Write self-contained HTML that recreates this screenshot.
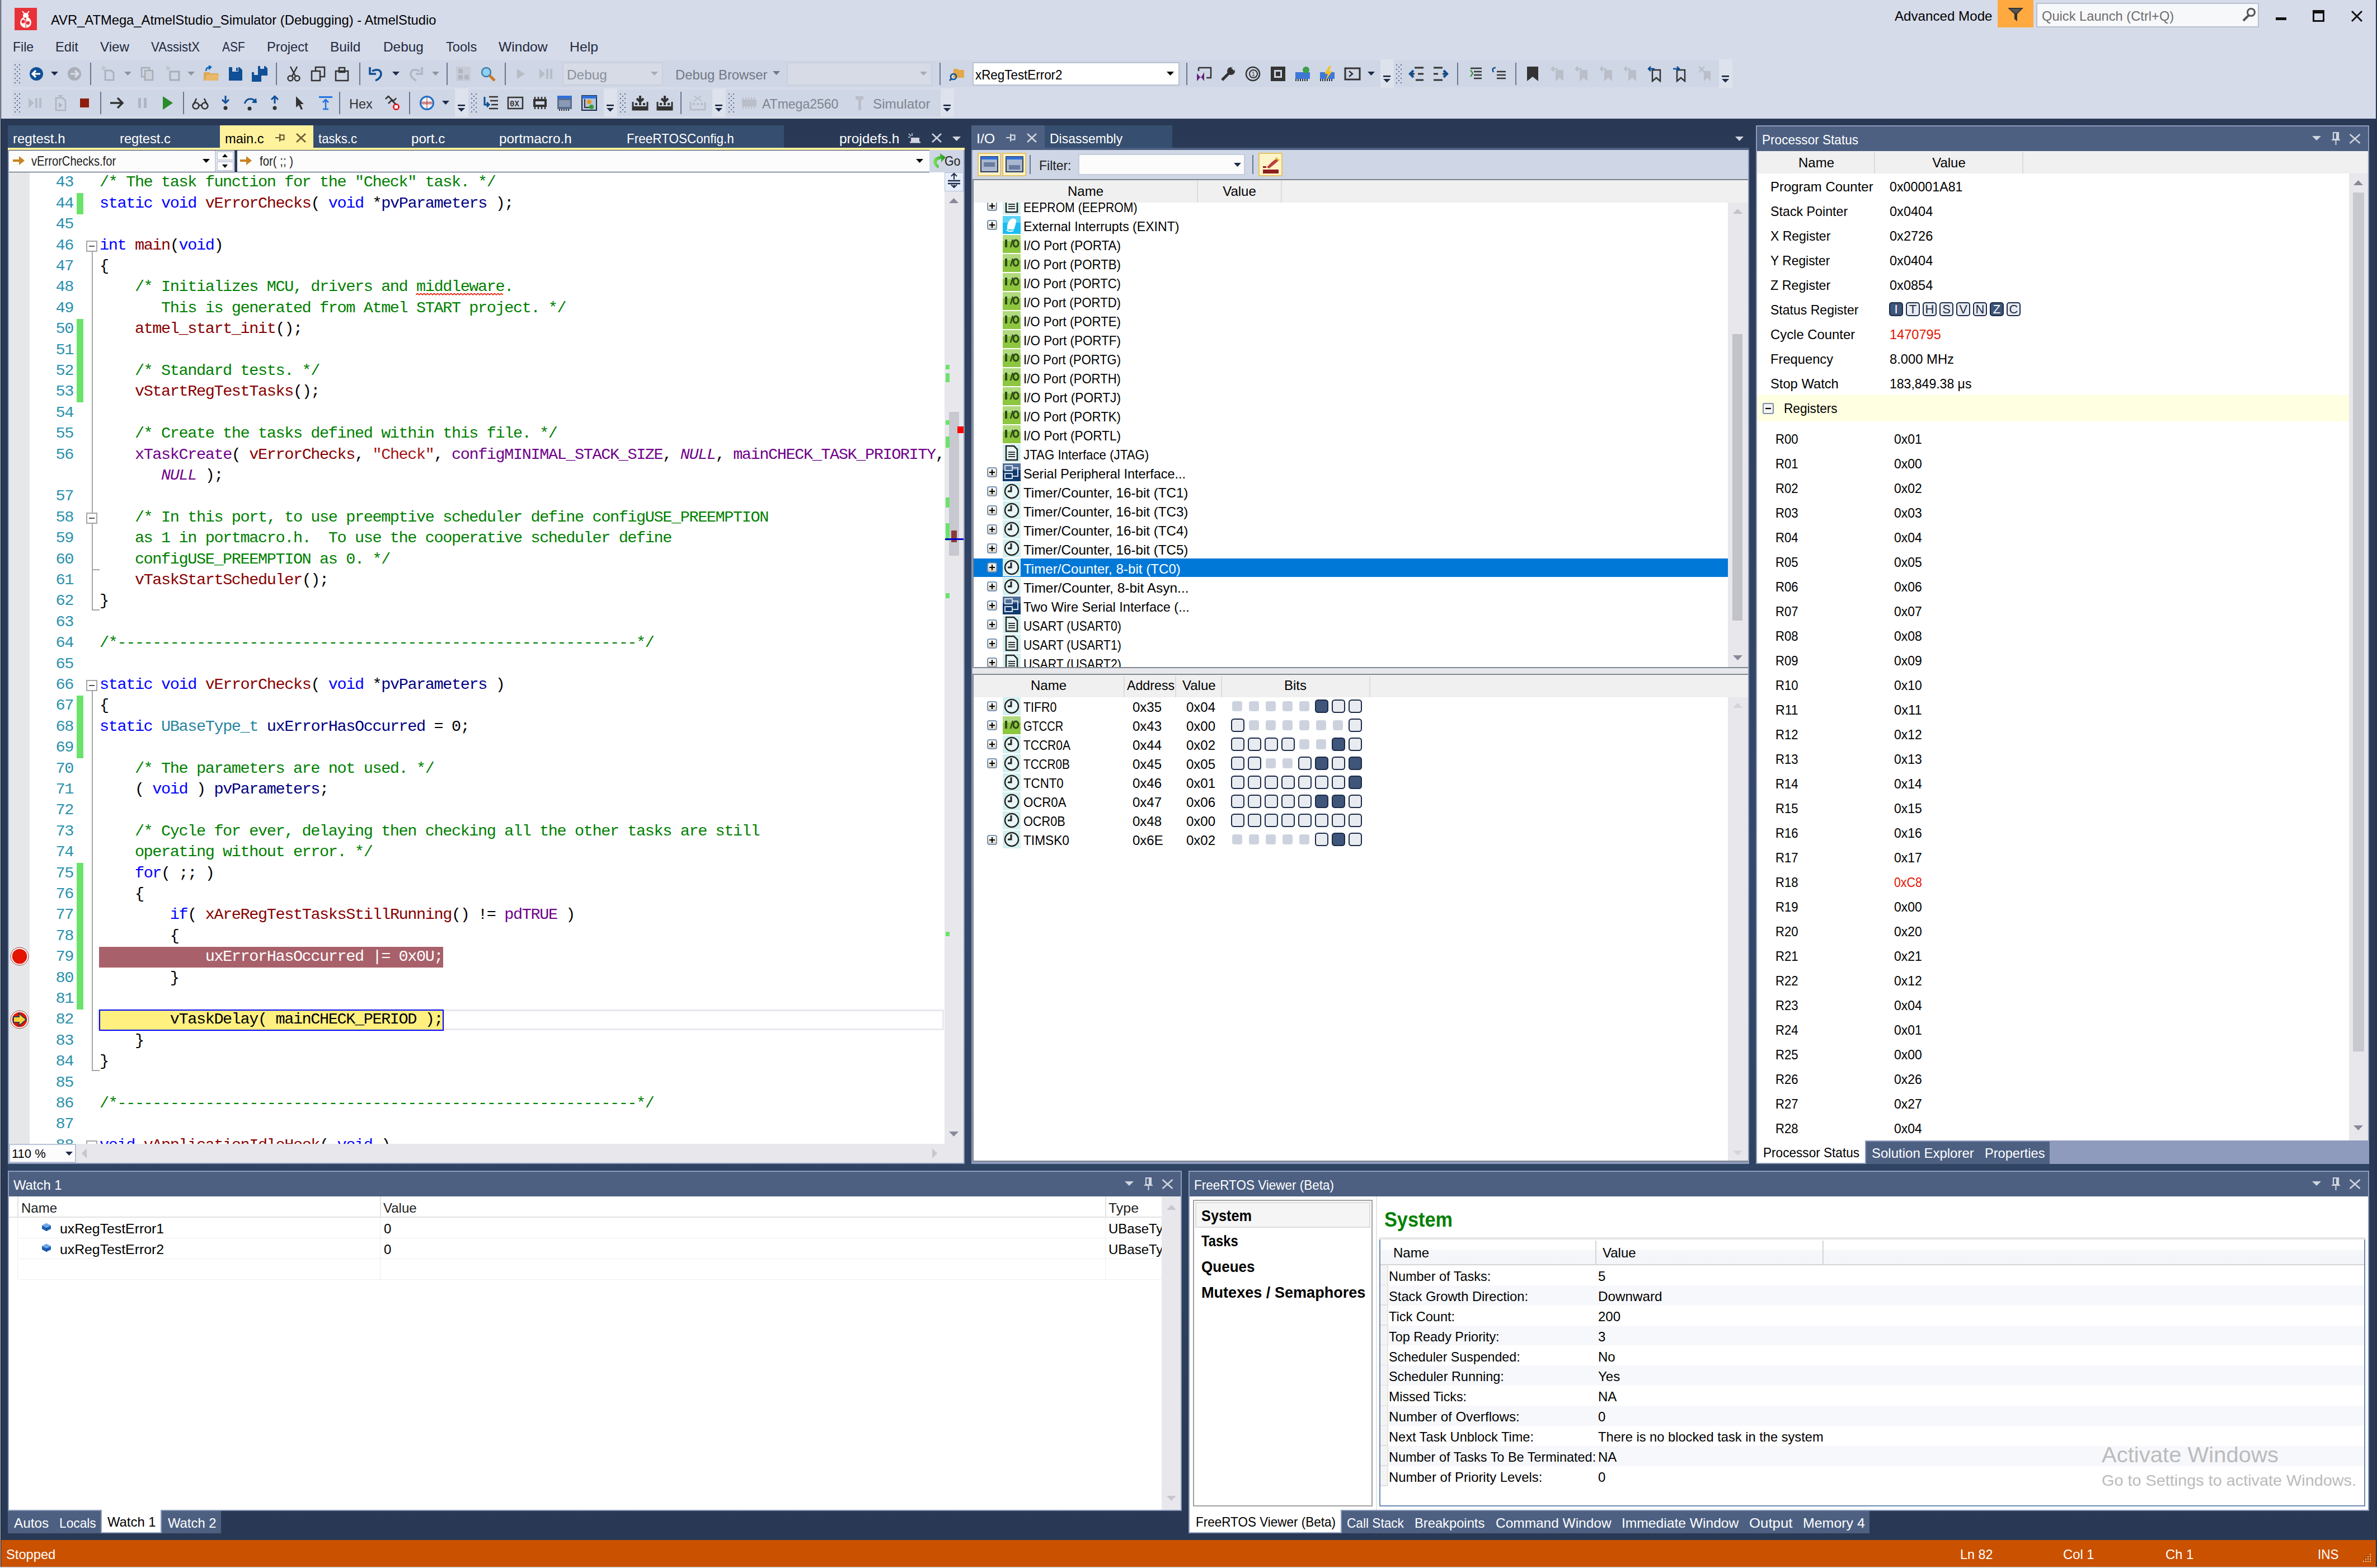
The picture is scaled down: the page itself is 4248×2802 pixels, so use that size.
<!DOCTYPE html>
<html><head><meta charset="utf-8"><title>AtmelStudio</title>
<style>
html,body{margin:0;padding:0;}
body{width:4248px;height:2802px;position:relative;overflow:hidden;background:#293955;font-family:"Liberation Sans",sans-serif;}
.a{position:absolute;}
.t{position:absolute;white-space:pre;line-height:1;font-family:"Liberation Sans",sans-serif;}
.m{position:absolute;white-space:pre;line-height:1;font-family:"Liberation Mono",monospace;font-size:28.5px;letter-spacing:-1.38px;}
</style></head><body>
<div class="a" style="left:14px;top:212px;width:4220px;height:2528px;background:#293955;background:linear-gradient(to bottom, #293955 0%, #2E3F5D 15%, #35496A 52%, #2F4362 75%, #293955 100%);"></div>
<div class="a" style="left:0px;top:0px;width:4248px;height:212px;background:#D6DBE9;"></div>
<div class="a" style="left:0px;top:0px;width:1px;height:2802px;background:#BFC3C8;"></div>
<div class="a" style="left:1px;top:0px;width:1px;height:2802px;background:#0F1F33;"></div>
<div class="a" style="left:4246px;top:0px;width:1px;height:2802px;background:#0F1F33;"></div>
<div class="a" style="left:4247px;top:0px;width:1px;height:2802px;background:#1E4FA0;"></div>
<svg class="a" style="left:26px;top:14px;" width="40" height="40" viewBox="0 0 40 40"><rect width="40" height="40" fill="#E8323A"/><circle cx="20" cy="26" r="10" fill="#fff"/><circle cx="20" cy="14" r="5" fill="#fff"/><path d="M14 6 L18 11 M26 6 L22 11" stroke="#fff" stroke-width="2"/><circle cx="15.5" cy="24.5" r="3.2" fill="#E8323A"/><circle cx="24" cy="27" r="3.2" fill="#E8323A"/><circle cx="19" cy="19" r="1.8" fill="#E8323A"/><path d="M20 17 V36" stroke="#E8323A" stroke-width="1.2"/></svg>
<div class="t" style="left:91px;top:23.60px;font-size:24px;color:#000;font-weight:400;transform:scaleX(0.9900);transform-origin:0 0;">AVR_ATMega_AtmelStudio_Simulator (Debugging) - AtmelStudio</div>
<div class="t" style="left:3386px;top:16.60px;font-size:24px;color:#000;font-weight:400;transform:scaleX(1.0060);transform-origin:0 0;">Advanced Mode</div>
<div class="a" style="left:3570px;top:0px;width:64px;height:49px;background:#FFA940;"></div>
<svg class="a" style="left:3586px;top:12px;" width="34" height="28" viewBox="0 0 34 28"><path d="M2 2 H30 L19 13 V26 L14 22 V13 Z" fill="#333"/><path d="M6 4 H26 L17 12" fill="#555"/></svg>
<div class="a" style="left:3639px;top:5px;width:398px;height:44px;background:#B9C0D0;"></div>
<div class="a" style="left:3641px;top:7px;width:394px;height:40px;background:#F7F8FA;"></div>
<div class="t" style="left:3649px;top:16.60px;font-size:24px;color:#6D6D6D;font-weight:400;transform:scaleX(0.9865);transform-origin:0 0;">Quick Launch (Ctrl+Q)</div>
<svg class="a" style="left:4004px;top:12px;" width="30" height="30" viewBox="0 0 30 30"><circle cx="19" cy="10" r="6.5" fill="none" stroke="#555" stroke-width="3"/><path d="M15 15 L5 25" stroke="#555" stroke-width="4"/></svg>
<div class="a" style="left:4067px;top:31px;width:19px;height:5px;background:#111;"></div>
<svg class="a" style="left:4133px;top:18px;" width="22" height="22" viewBox="0 0 22 22"><rect x="1.5" y="1.5" width="18" height="18" fill="none" stroke="#111" stroke-width="3"/><rect x="1" y="1" width="19" height="5" fill="#111"/></svg>
<svg class="a" style="left:4200px;top:18px;" width="24" height="22" viewBox="0 0 24 22"><path d="M3 2 L21 20 M21 2 L3 20" stroke="#111" stroke-width="3"/></svg>
<div class="t" style="left:23px;top:71.60px;font-size:24px;color:#1E2A3E;font-weight:400;transform:scaleX(0.9593);transform-origin:0 0;">File</div>
<div class="t" style="left:99px;top:71.60px;font-size:24px;color:#1E2A3E;font-weight:400;transform:scaleX(0.9865);transform-origin:0 0;">Edit</div>
<div class="t" style="left:179px;top:71.60px;font-size:24px;color:#1E2A3E;font-weight:400;transform:scaleX(1.0060);transform-origin:0 0;">View</div>
<div class="t" style="left:270px;top:71.60px;font-size:24px;color:#1E2A3E;font-weight:400;transform:scaleX(0.9242);transform-origin:0 0;">VAssistX</div>
<div class="t" style="left:397px;top:71.60px;font-size:24px;color:#1E2A3E;font-weight:400;transform:scaleX(0.8741);transform-origin:0 0;">ASF</div>
<div class="t" style="left:477px;top:71.60px;font-size:24px;color:#1E2A3E;font-weight:400;transform:scaleX(0.9866);transform-origin:0 0;">Project</div>
<div class="t" style="left:590px;top:71.60px;font-size:24px;color:#1E2A3E;font-weight:400;transform:scaleX(1.0174);transform-origin:0 0;">Build</div>
<div class="t" style="left:685px;top:71.60px;font-size:24px;color:#1E2A3E;font-weight:400;transform:scaleX(1.0152);transform-origin:0 0;">Debug</div>
<div class="t" style="left:797px;top:71.60px;font-size:24px;color:#1E2A3E;font-weight:400;transform:scaleX(0.9852);transform-origin:0 0;">Tools</div>
<div class="t" style="left:891px;top:71.60px;font-size:24px;color:#1E2A3E;font-weight:400;transform:scaleX(1.0262);transform-origin:0 0;">Window</div>
<div class="t" style="left:1018px;top:71.60px;font-size:24px;color:#1E2A3E;font-weight:400;transform:scaleX(1.0332);transform-origin:0 0;">Help</div>
<div class="a" style="left:22px;top:108px;width:2445px;height:48px;background:#CFD6E5;"></div>
<div class="a" style="left:2467px;top:106px;width:24px;height:51px;background:#DDE2EC;"></div>
<svg class="a" style="left:2472px;top:135px;" width="14" height="14" viewBox="0 0 14 14"><rect x="0" y="0" width="13" height="2.5" fill="#0E1A33"/><path d="M0 6 H13 L6.5 12.5 Z" fill="#1B2A47"/></svg>
<div class="a" style="left:2491px;top:108px;width:581px;height:48px;background:#CFD6E5;"></div>
<div class="a" style="left:3072px;top:106px;width:24px;height:51px;background:#DDE2EC;"></div>
<svg class="a" style="left:3077px;top:135px;" width="14" height="14" viewBox="0 0 14 14"><rect x="0" y="0" width="13" height="2.5" fill="#0E1A33"/><path d="M0 6 H13 L6.5 12.5 Z" fill="#1B2A47"/></svg>
<div class="a" style="left:22px;top:160px;width:791px;height:48px;background:#CFD6E5;"></div>
<div class="a" style="left:813px;top:158px;width:24px;height:51px;background:#DDE2EC;"></div>
<svg class="a" style="left:818px;top:187px;" width="14" height="14" viewBox="0 0 14 14"><rect x="0" y="0" width="13" height="2.5" fill="#0E1A33"/><path d="M0 6 H13 L6.5 12.5 Z" fill="#1B2A47"/></svg>
<div class="a" style="left:837px;top:160px;width:242px;height:48px;background:#CFD6E5;"></div>
<div class="a" style="left:1079px;top:158px;width:24px;height:51px;background:#DDE2EC;"></div>
<svg class="a" style="left:1084px;top:187px;" width="14" height="14" viewBox="0 0 14 14"><rect x="0" y="0" width="13" height="2.5" fill="#0E1A33"/><path d="M0 6 H13 L6.5 12.5 Z" fill="#1B2A47"/></svg>
<div class="a" style="left:1103px;top:160px;width:170px;height:48px;background:#CFD6E5;"></div>
<div class="a" style="left:1273px;top:158px;width:24px;height:51px;background:#DDE2EC;"></div>
<svg class="a" style="left:1278px;top:187px;" width="14" height="14" viewBox="0 0 14 14"><rect x="0" y="0" width="13" height="2.5" fill="#0E1A33"/><path d="M0 6 H13 L6.5 12.5 Z" fill="#1B2A47"/></svg>
<div class="a" style="left:1297px;top:160px;width:384px;height:48px;background:#CFD6E5;"></div>
<div class="a" style="left:1681px;top:158px;width:24px;height:51px;background:#DDE2EC;"></div>
<svg class="a" style="left:1686px;top:187px;" width="14" height="14" viewBox="0 0 14 14"><rect x="0" y="0" width="13" height="2.5" fill="#0E1A33"/><path d="M0 6 H13 L6.5 12.5 Z" fill="#1B2A47"/></svg>
<svg class="a" style="left:26px;top:115px;" width="10" height="34" viewBox="0 0 10 34"><rect x="0" y="0" width="2" height="2" fill="#5B6A8A"/><rect x="8" y="0" width="2" height="2" fill="#5B6A8A"/><rect x="4" y="4" width="2" height="2" fill="#5B6A8A"/><rect x="0" y="8" width="2" height="2" fill="#5B6A8A"/><rect x="8" y="8" width="2" height="2" fill="#5B6A8A"/><rect x="4" y="12" width="2" height="2" fill="#5B6A8A"/><rect x="0" y="16" width="2" height="2" fill="#5B6A8A"/><rect x="8" y="16" width="2" height="2" fill="#5B6A8A"/><rect x="4" y="20" width="2" height="2" fill="#5B6A8A"/><rect x="0" y="24" width="2" height="2" fill="#5B6A8A"/><rect x="8" y="24" width="2" height="2" fill="#5B6A8A"/><rect x="4" y="28" width="2" height="2" fill="#5B6A8A"/><rect x="0" y="32" width="2" height="2" fill="#5B6A8A"/><rect x="8" y="32" width="2" height="2" fill="#5B6A8A"/></svg>
<svg class="a" style="left:26px;top:167px;" width="10" height="34" viewBox="0 0 10 34"><rect x="0" y="0" width="2" height="2" fill="#5B6A8A"/><rect x="8" y="0" width="2" height="2" fill="#5B6A8A"/><rect x="4" y="4" width="2" height="2" fill="#5B6A8A"/><rect x="0" y="8" width="2" height="2" fill="#5B6A8A"/><rect x="8" y="8" width="2" height="2" fill="#5B6A8A"/><rect x="4" y="12" width="2" height="2" fill="#5B6A8A"/><rect x="0" y="16" width="2" height="2" fill="#5B6A8A"/><rect x="8" y="16" width="2" height="2" fill="#5B6A8A"/><rect x="4" y="20" width="2" height="2" fill="#5B6A8A"/><rect x="0" y="24" width="2" height="2" fill="#5B6A8A"/><rect x="8" y="24" width="2" height="2" fill="#5B6A8A"/><rect x="4" y="28" width="2" height="2" fill="#5B6A8A"/><rect x="0" y="32" width="2" height="2" fill="#5B6A8A"/><rect x="8" y="32" width="2" height="2" fill="#5B6A8A"/></svg>
<svg class="a" style="left:2495px;top:115px;" width="10" height="34" viewBox="0 0 10 34"><rect x="0" y="0" width="2" height="2" fill="#5B6A8A"/><rect x="8" y="0" width="2" height="2" fill="#5B6A8A"/><rect x="4" y="4" width="2" height="2" fill="#5B6A8A"/><rect x="0" y="8" width="2" height="2" fill="#5B6A8A"/><rect x="8" y="8" width="2" height="2" fill="#5B6A8A"/><rect x="4" y="12" width="2" height="2" fill="#5B6A8A"/><rect x="0" y="16" width="2" height="2" fill="#5B6A8A"/><rect x="8" y="16" width="2" height="2" fill="#5B6A8A"/><rect x="4" y="20" width="2" height="2" fill="#5B6A8A"/><rect x="0" y="24" width="2" height="2" fill="#5B6A8A"/><rect x="8" y="24" width="2" height="2" fill="#5B6A8A"/><rect x="4" y="28" width="2" height="2" fill="#5B6A8A"/><rect x="0" y="32" width="2" height="2" fill="#5B6A8A"/><rect x="8" y="32" width="2" height="2" fill="#5B6A8A"/></svg>
<svg class="a" style="left:842px;top:167px;" width="10" height="34" viewBox="0 0 10 34"><rect x="0" y="0" width="2" height="2" fill="#5B6A8A"/><rect x="8" y="0" width="2" height="2" fill="#5B6A8A"/><rect x="4" y="4" width="2" height="2" fill="#5B6A8A"/><rect x="0" y="8" width="2" height="2" fill="#5B6A8A"/><rect x="8" y="8" width="2" height="2" fill="#5B6A8A"/><rect x="4" y="12" width="2" height="2" fill="#5B6A8A"/><rect x="0" y="16" width="2" height="2" fill="#5B6A8A"/><rect x="8" y="16" width="2" height="2" fill="#5B6A8A"/><rect x="4" y="20" width="2" height="2" fill="#5B6A8A"/><rect x="0" y="24" width="2" height="2" fill="#5B6A8A"/><rect x="8" y="24" width="2" height="2" fill="#5B6A8A"/><rect x="4" y="28" width="2" height="2" fill="#5B6A8A"/><rect x="0" y="32" width="2" height="2" fill="#5B6A8A"/><rect x="8" y="32" width="2" height="2" fill="#5B6A8A"/></svg>
<svg class="a" style="left:1108px;top:167px;" width="10" height="34" viewBox="0 0 10 34"><rect x="0" y="0" width="2" height="2" fill="#5B6A8A"/><rect x="8" y="0" width="2" height="2" fill="#5B6A8A"/><rect x="4" y="4" width="2" height="2" fill="#5B6A8A"/><rect x="0" y="8" width="2" height="2" fill="#5B6A8A"/><rect x="8" y="8" width="2" height="2" fill="#5B6A8A"/><rect x="4" y="12" width="2" height="2" fill="#5B6A8A"/><rect x="0" y="16" width="2" height="2" fill="#5B6A8A"/><rect x="8" y="16" width="2" height="2" fill="#5B6A8A"/><rect x="4" y="20" width="2" height="2" fill="#5B6A8A"/><rect x="0" y="24" width="2" height="2" fill="#5B6A8A"/><rect x="8" y="24" width="2" height="2" fill="#5B6A8A"/><rect x="4" y="28" width="2" height="2" fill="#5B6A8A"/><rect x="0" y="32" width="2" height="2" fill="#5B6A8A"/><rect x="8" y="32" width="2" height="2" fill="#5B6A8A"/></svg>
<svg class="a" style="left:1302px;top:167px;" width="10" height="34" viewBox="0 0 10 34"><rect x="0" y="0" width="2" height="2" fill="#5B6A8A"/><rect x="8" y="0" width="2" height="2" fill="#5B6A8A"/><rect x="4" y="4" width="2" height="2" fill="#5B6A8A"/><rect x="0" y="8" width="2" height="2" fill="#5B6A8A"/><rect x="8" y="8" width="2" height="2" fill="#5B6A8A"/><rect x="4" y="12" width="2" height="2" fill="#5B6A8A"/><rect x="0" y="16" width="2" height="2" fill="#5B6A8A"/><rect x="8" y="16" width="2" height="2" fill="#5B6A8A"/><rect x="4" y="20" width="2" height="2" fill="#5B6A8A"/><rect x="0" y="24" width="2" height="2" fill="#5B6A8A"/><rect x="8" y="24" width="2" height="2" fill="#5B6A8A"/><rect x="4" y="28" width="2" height="2" fill="#5B6A8A"/><rect x="0" y="32" width="2" height="2" fill="#5B6A8A"/><rect x="8" y="32" width="2" height="2" fill="#5B6A8A"/></svg>
<svg class="a" style="left:50px;top:117px;" width="30" height="30" viewBox="0 0 30 30"><circle cx="15" cy="15" r="12" fill="#0E4F96"/><path d="M8 15 H22 M14 9 L8 15 L14 21" stroke="#fff" stroke-width="3.2" fill="none"/></svg>
<svg class="a" style="left:91px;top:128px;" width="14" height="8" viewBox="0 0 14 8"><path d="M0 0 H13 L6.5 7 Z" fill="#1B2A47"/></svg>
<svg class="a" style="left:118px;top:117px;" width="30" height="30" viewBox="0 0 30 30"><circle cx="15" cy="15" r="12" fill="#A9AEB8"/><path d="M8 15 H22 M16 9 L22 15 L16 21" stroke="#D8DCE4" stroke-width="3.2" fill="none"/></svg>
<div class="a" style="left:161px;top:112px;width:2px;height:40px;background:#6B7590;"></div>
<svg class="a" style="left:179px;top:117px;" width="30" height="30" viewBox="0 0 30 30"><path d="M9 9 H20 L24 13 V26 H9 Z" fill="none" stroke="#A8ADB8" stroke-width="2.5"/><path d="M3 2 L9 8 M9 2 L3 8 M6 1 V9 M2 5 H10" stroke="#C0C4CC" stroke-width="1.5"/></svg>
<svg class="a" style="left:222px;top:128px;" width="14" height="8" viewBox="0 0 14 8"><path d="M0 0 H13 L6.5 7 Z" fill="#8E939E"/></svg>
<svg class="a" style="left:247px;top:117px;" width="30" height="30" viewBox="0 0 30 30"><rect x="6" y="4" width="14" height="16" fill="none" stroke="#A8ADB8" stroke-width="2.5"/><rect x="12" y="9" width="14" height="17" fill="#CDD1DA" stroke="#A8ADB8" stroke-width="2.5"/></svg>
<svg class="a" style="left:294px;top:117px;" width="30" height="30" viewBox="0 0 30 30"><rect x="10" y="11" width="16" height="15" fill="none" stroke="#A8ADB8" stroke-width="3"/><path d="M3 2 L9 8 M9 2 L3 8 M6 1 V9 M2 5 H10" stroke="#C0C4CC" stroke-width="1.5"/></svg>
<svg class="a" style="left:335px;top:128px;" width="14" height="8" viewBox="0 0 14 8"><path d="M0 0 H13 L6.5 7 Z" fill="#8E939E"/></svg>
<svg class="a" style="left:362px;top:117px;" width="30" height="30" viewBox="0 0 30 30"><path d="M2 12 H12 L14 14 H28 V27 H2 Z" fill="#DCA955"/><path d="M4 27 L8 16 H30 L26 27 Z" fill="#E8B96A"/><path d="M6 10 Q6 3 14 3 M11 0 L15 3 L11 7" stroke="#0E62B8" stroke-width="2.5" fill="none"/></svg>
<svg class="a" style="left:406px;top:117px;" width="30" height="30" viewBox="0 0 30 30"><path d="M3 3 H22 L27 8 V27 H3 Z" fill="#0E4F96"/><rect x="9" y="3" width="11" height="8" fill="#CFD6E5"/><rect x="16" y="4" width="3" height="6" fill="#0E4F96"/></svg>
<svg class="a" style="left:449px;top:117px;" width="30" height="30" viewBox="0 0 30 30"><path d="M12 1 H25 L29 5 V18 H12 Z" fill="#0E4F96"/><rect x="16" y="1" width="7" height="5" fill="#CFD6E5"/><path d="M1 12 H14 L18 16 V29 H1 Z" fill="#0E4F96"/><rect x="5" y="12" width="7" height="5" fill="#CFD6E5"/></svg>
<div class="a" style="left:493px;top:112px;width:2px;height:40px;background:#6B7590;"></div>
<svg class="a" style="left:510px;top:117px;" width="30" height="30" viewBox="0 0 30 30"><path d="M9 2 L18 19 M21 2 L12 19" stroke="#333" stroke-width="2.5"/><circle cx="9" cy="23" r="4.5" fill="none" stroke="#333" stroke-width="2.5"/><circle cx="21" cy="23" r="4.5" fill="none" stroke="#333" stroke-width="2.5"/></svg>
<svg class="a" style="left:554px;top:117px;" width="30" height="30" viewBox="0 0 30 30"><rect x="3" y="10" width="15" height="17" fill="#CFD6E5" stroke="#333" stroke-width="2.5"/><path d="M10 9 V3 H26 V20 H19" fill="none" stroke="#333" stroke-width="2.5"/></svg>
<svg class="a" style="left:596px;top:117px;" width="30" height="30" viewBox="0 0 30 30"><rect x="4" y="10" width="22" height="17" fill="none" stroke="#333" stroke-width="2.5"/><rect x="10" y="4" width="10" height="8" fill="none" stroke="#333" stroke-width="2.5"/></svg>
<div class="a" style="left:642px;top:112px;width:2px;height:40px;background:#6B7590;"></div>
<svg class="a" style="left:657px;top:117px;" width="30" height="30" viewBox="0 0 30 30"><path d="M8 10 Q22 4 24 14 Q25 22 14 27" stroke="#0E4F96" stroke-width="3.5" fill="none"/><path d="M4 3 V15 H15" stroke="#0E4F96" stroke-width="3.5" fill="none"/></svg>
<svg class="a" style="left:701px;top:128px;" width="14" height="8" viewBox="0 0 14 8"><path d="M0 0 H13 L6.5 7 Z" fill="#1B2A47"/></svg>
<svg class="a" style="left:728px;top:117px;" width="30" height="30" viewBox="0 0 30 30"><path d="M22 10 Q8 4 6 14 Q5 22 16 27" stroke="#B0B5BF" stroke-width="3.5" fill="none"/><path d="M26 3 V15 H15" stroke="#B0B5BF" stroke-width="3.5" fill="none"/></svg>
<svg class="a" style="left:772px;top:128px;" width="14" height="8" viewBox="0 0 14 8"><path d="M0 0 H13 L6.5 7 Z" fill="#8E939E"/></svg>
<div class="a" style="left:798px;top:112px;width:2px;height:40px;background:#6B7590;"></div>
<svg class="a" style="left:813px;top:117px;" width="30" height="30" viewBox="0 0 30 30"><rect x="2" y="2" width="26" height="26" fill="#C6CBD6"/><rect x="6" y="6" width="8" height="8" fill="#B0B5C0"/><rect x="6" y="17" width="8" height="8" fill="#B0B5C0"/><rect x="17" y="17" width="8" height="8" fill="#B0B5C0"/></svg>
<svg class="a" style="left:857px;top:117px;" width="30" height="30" viewBox="0 0 30 30"><circle cx="12" cy="12" r="8" fill="#8FD0F0" stroke="#3E7FA8" stroke-width="2.5"/><path d="M18 18 L27 27" stroke="#C77A2A" stroke-width="5"/></svg>
<div class="a" style="left:902px;top:112px;width:2px;height:40px;background:#6B7590;"></div>
<svg class="a" style="left:915px;top:117px;" width="30" height="30" viewBox="0 0 30 30"><path d="M9 6 L23 15 L9 24 Z" fill="#B7BCC6"/></svg>
<svg class="a" style="left:961px;top:117px;" width="30" height="30" viewBox="0 0 30 30"><path d="M3 6 L13 15 L3 24 Z" fill="#B7BCC6"/><rect x="15" y="6" width="4" height="18" fill="#B7BCC6"/><rect x="22" y="6" width="4" height="18" fill="#B7BCC6"/></svg>
<div class="a" style="left:1005px;top:111px;width:180px;height:42px;background:#C9CFDC;"></div>
<div class="a" style="left:1007px;top:113px;width:176px;height:38px;background:#D6DBE6;"></div>
<div class="t" style="left:1013px;top:121.60px;font-size:24px;color:#8C919C;font-weight:400;transform:scaleX(1.0152);transform-origin:0 0;">Debug</div>
<svg class="a" style="left:1163px;top:128px;" width="14" height="8" viewBox="0 0 14 8"><path d="M0 0 H13 L6.5 7 Z" fill="#A6ABB6"/></svg>
<div class="t" style="left:1207px;top:121.60px;font-size:24px;color:#727885;font-weight:400;transform:scaleX(0.9945);transform-origin:0 0;">Debug Browser</div>
<svg class="a" style="left:1381px;top:127px;" width="14" height="8" viewBox="0 0 14 8"><path d="M0 0 H13 L6.5 7 Z" fill="#727885"/></svg>
<div class="a" style="left:1406px;top:111px;width:260px;height:42px;background:#C9CFDC;"></div>
<div class="a" style="left:1408px;top:113px;width:256px;height:38px;background:#D6DBE6;"></div>
<svg class="a" style="left:1644px;top:128px;" width="14" height="8" viewBox="0 0 14 8"><path d="M0 0 H13 L6.5 7 Z" fill="#A6ABB6"/></svg>
<div class="a" style="left:1679px;top:112px;width:2px;height:40px;background:#6B7590;"></div>
<svg class="a" style="left:1696px;top:117px;" width="30" height="30" viewBox="0 0 30 30"><path d="M8 6 H15 L17 8 H27 V22 H8 Z" fill="#E2A84A"/><circle cx="8" cy="20" r="5" fill="none" stroke="#0E4F96" stroke-width="2.5"/><path d="M4.5 23.5 L1 27" stroke="#0E4F96" stroke-width="3"/></svg>
<div class="a" style="left:1738px;top:111px;width:370px;height:42px;background:#B9C0D0;"></div>
<div class="a" style="left:1740px;top:113px;width:366px;height:38px;background:#FFFFFF;"></div>
<div class="t" style="left:1743px;top:121.60px;font-size:24px;color:#000;font-weight:400;transform:scaleX(0.9326);transform-origin:0 0;">xRegTestError2</div>
<svg class="a" style="left:2085px;top:128px;" width="14" height="8" viewBox="0 0 14 8"><path d="M0 0 H13 L6.5 7 Z" fill="#000"/></svg>
<div class="a" style="left:2120px;top:112px;width:2px;height:40px;background:#6B7590;"></div>
<svg class="a" style="left:2136px;top:117px;" width="30" height="30" viewBox="0 0 30 30"><path d="M6 4 H28 V22 H20" fill="none" stroke="#333" stroke-width="2.5"/><path d="M6 4 V10" stroke="#333" stroke-width="2.5"/><path d="M3 14 L10 22 L16 12 V28 L10 20 L3 28 Z" fill="#68217A"/></svg>
<svg class="a" style="left:2180px;top:117px;" width="30" height="30" viewBox="0 0 30 30"><path d="M4 26 L16 14" stroke="#333" stroke-width="5"/><circle cx="20" cy="10" r="7" fill="#333"/><path d="M20 4 L26 4 L26 10" fill="#CFD6E5"/></svg>
<svg class="a" style="left:2224px;top:117px;" width="30" height="30" viewBox="0 0 30 30"><circle cx="15" cy="15" r="12" fill="none" stroke="#333" stroke-width="2.5"/><circle cx="16" cy="15" r="7" fill="none" stroke="#333" stroke-width="2"/><text x="13" y="19" font-size="10" fill="#333">1</text></svg>
<svg class="a" style="left:2269px;top:117px;" width="30" height="30" viewBox="0 0 30 30"><rect x="2" y="2" width="26" height="26" fill="#333"/><rect x="8" y="8" width="14" height="14" fill="#CFD6E5"/><rect x="11" y="11" width="8" height="8" fill="#333"/></svg>
<svg class="a" style="left:2313px;top:117px;" width="30" height="30" viewBox="0 0 30 30"><rect x="2" y="12" width="26" height="12" fill="#3E78D6"/><path d="M3 24 V28 M7 24 V28 M11 24 V28 M15 24 V28 M19 24 V28 M23 24 V28" stroke="#333" stroke-width="2"/><circle cx="21" cy="8" r="6" fill="#3CA04A"/></svg>
<svg class="a" style="left:2357px;top:117px;" width="30" height="30" viewBox="0 0 30 30"><rect x="2" y="12" width="26" height="12" fill="#3E78D6"/><path d="M3 24 V28 M7 24 V28 M11 24 V28 M15 24 V28 M19 24 V28 M23 24 V28" stroke="#333" stroke-width="2"/><path d="M18 1 L10 15 H16 L12 27 L24 10 H18 L22 1 Z" fill="#F2C12E"/></svg>
<svg class="a" style="left:2402px;top:117px;" width="30" height="30" viewBox="0 0 30 30"><rect x="2" y="5" width="26" height="20" fill="none" stroke="#333" stroke-width="3"/><path d="M9 10 L15 15 L9 20" stroke="#333" stroke-width="2.5" fill="none"/></svg>
<svg class="a" style="left:2444px;top:128px;" width="14" height="8" viewBox="0 0 14 8"><path d="M0 0 H13 L6.5 7 Z" fill="#1B2A47"/></svg>
<svg class="a" style="left:2516px;top:117px;" width="30" height="30" viewBox="0 0 30 30"><path d="M12 4 H28 M14 26 H28 M2 15 H12 M18 15 H28" stroke="#333" stroke-width="3"/><path d="M10 9 L4 15 L10 21" stroke="#0E4F96" stroke-width="4" fill="none"/></svg>
<svg class="a" style="left:2560px;top:117px;" width="30" height="30" viewBox="0 0 30 30"><path d="M2 4 H18 M2 26 H18 M2 15 H10 M18 15 H28" stroke="#333" stroke-width="3"/><path d="M20 9 L26 15 L20 21" stroke="#0E4F96" stroke-width="4" fill="none"/></svg>
<div class="a" style="left:2604px;top:112px;width:2px;height:40px;background:#6B7590;"></div>
<svg class="a" style="left:2622px;top:117px;" width="30" height="30" viewBox="0 0 30 30"><path d="M6 5 H26 M12 11 H26 M12 17 H26 M12 23 H26" stroke="#333" stroke-width="2.5"/><path d="M6 8 L10 14 L6 20" stroke="#2B8A2B" stroke-width="2" fill="none"/></svg>
<svg class="a" style="left:2663px;top:117px;" width="30" height="30" viewBox="0 0 30 30"><path d="M12 11 H28 M12 17 H28 M12 23 H28" stroke="#333" stroke-width="2.5"/><path d="M6 12 Q2 4 10 4" stroke="#0E4F96" stroke-width="2.5" fill="none"/></svg>
<div class="a" style="left:2708px;top:112px;width:2px;height:40px;background:#6B7590;"></div>
<svg class="a" style="left:2724px;top:117px;" width="30" height="30" viewBox="0 0 30 30"><path d="M5 2 H25 V28 L15 20 L5 28 Z" fill="#333"/></svg>
<svg class="a" style="left:2770px;top:117px;" width="30" height="30" viewBox="0 0 30 30"><path d="M10 8 H24 V28 L17 22 L10 28 Z" fill="#B9BEC8"/><path d="M3 6 H14 M7 2 L3 6 L7 10" stroke="#B9BEC8" stroke-width="2.5" fill="none"/></svg>
<svg class="a" style="left:2813px;top:117px;" width="30" height="30" viewBox="0 0 30 30"><path d="M10 8 H24 V28 L17 22 L10 28 Z" fill="#B9BEC8"/><path d="M3 6 H14 M7 2 L3 6 L7 10" stroke="#B9BEC8" stroke-width="2.5" fill="none"/></svg>
<svg class="a" style="left:2857px;top:117px;" width="30" height="30" viewBox="0 0 30 30"><path d="M10 8 H24 V28 L17 22 L10 28 Z" fill="#B9BEC8"/><path d="M3 6 H14 M7 2 L3 6 L7 10" stroke="#B9BEC8" stroke-width="2.5" fill="none"/></svg>
<svg class="a" style="left:2900px;top:117px;" width="30" height="30" viewBox="0 0 30 30"><path d="M10 8 H24 V28 L17 22 L10 28 Z" fill="#B9BEC8"/><path d="M3 6 H14 M7 2 L3 6 L7 10" stroke="#B9BEC8" stroke-width="2.5" fill="none"/></svg>
<svg class="a" style="left:2943px;top:117px;" width="30" height="30" viewBox="0 0 30 30"><path d="M10 8 H24 V28 L17 22 L10 28 Z" fill="none" stroke="#333" stroke-width="2.5"/><path d="M3 6 H14 M7 2 L3 6 L7 10" stroke="#0E4F96" stroke-width="2.5" fill="none"/></svg>
<svg class="a" style="left:2987px;top:117px;" width="30" height="30" viewBox="0 0 30 30"><path d="M10 8 H24 V28 L17 22 L10 28 Z" fill="none" stroke="#333" stroke-width="2.5"/><path d="M3 6 H14 M10 2 L14 6 L10 10" stroke="#0E4F96" stroke-width="2.5" fill="none"/></svg>
<svg class="a" style="left:3033px;top:117px;" width="30" height="30" viewBox="0 0 30 30"><path d="M12 10 H24 V28 L18 22 L12 28 Z" fill="#B9BEC8"/><path d="M3 2 L13 12 M13 2 L3 12" stroke="#B9BEC8" stroke-width="2.5"/></svg>
<svg class="a" style="left:48px;top:169px;" width="30" height="30" viewBox="0 0 30 30"><path d="M3 6 L13 15 L3 24 Z" fill="#B7BCC6"/><rect x="15" y="6" width="4" height="18" fill="#B7BCC6"/><rect x="22" y="6" width="4" height="18" fill="#B7BCC6"/></svg>
<svg class="a" style="left:93px;top:169px;" width="30" height="30" viewBox="0 0 30 30"><path d="M7 6 H19 L24 11 V28 H7 Z" fill="none" stroke="#B0B5C0" stroke-width="2.5"/><path d="M12 14 L19 19 L12 24 Z" fill="#B0B5C0"/><path d="M10 1 H20 L15 5 Z" fill="#B0B5C0"/></svg>
<div class="a" style="left:143px;top:176px;width:16px;height:16px;background:#8E1F0E;"></div>
<div class="a" style="left:179px;top:164px;width:2px;height:40px;background:#6B7590;"></div>
<svg class="a" style="left:194px;top:169px;" width="30" height="30" viewBox="0 0 30 30"><path d="M3 15 H25 M16 6 L25 15 L16 24" stroke="#333" stroke-width="3.5" fill="none"/></svg>
<svg class="a" style="left:240px;top:169px;" width="30" height="30" viewBox="0 0 30 30"><rect x="7" y="6" width="5" height="18" fill="#B0B5C0"/><rect x="17" y="6" width="5" height="18" fill="#B0B5C0"/></svg>
<svg class="a" style="left:284px;top:169px;" width="30" height="30" viewBox="0 0 30 30"><path d="M7 3 L25 15 L7 27 Z" fill="#2B8A2B"/></svg>
<div class="a" style="left:327px;top:164px;width:2px;height:40px;background:#6B7590;"></div>
<svg class="a" style="left:343px;top:169px;" width="30" height="30" viewBox="0 0 30 30"><circle cx="7" cy="20" r="5.5" fill="none" stroke="#333" stroke-width="2.5"/><circle cx="23" cy="20" r="5.5" fill="none" stroke="#333" stroke-width="2.5"/><path d="M12 19 H18 M3 18 L8 7 M27 18 L22 7" stroke="#333" stroke-width="2.5" fill="none"/></svg>
<svg class="a" style="left:388px;top:169px;" width="30" height="30" viewBox="0 0 30 30"><path d="M15 2 V15 M9 9 L15 15 L21 9" stroke="#0E4F96" stroke-width="3" fill="none"/><circle cx="15" cy="24" r="3.5" fill="#333"/></svg>
<svg class="a" style="left:432px;top:169px;" width="30" height="30" viewBox="0 0 30 30"><path d="M5 16 Q9 6 18 8 Q23 9 24 14" stroke="#0E4F96" stroke-width="3" fill="none"/><path d="M18 14 H26 V6" fill="#0E4F96"/><path d="M19 15 L27 15 L26 7 Z" fill="#0E4F96"/><circle cx="14" cy="25" r="3.5" fill="#333"/></svg>
<svg class="a" style="left:476px;top:169px;" width="30" height="30" viewBox="0 0 30 30"><path d="M15 16 V3 M9 9 L15 3 L21 9" stroke="#0E4F96" stroke-width="3" fill="none"/><circle cx="15" cy="24" r="3.5" fill="#333"/></svg>
<svg class="a" style="left:521px;top:169px;" width="30" height="30" viewBox="0 0 30 30"><path d="M8 3 L22 17 H16 L20 26 L17 27 L13 19 L8 23 Z" fill="#333"/></svg>
<svg class="a" style="left:567px;top:169px;" width="30" height="30" viewBox="0 0 30 30"><rect x="3" y="3" width="24" height="3" fill="#1E74E0"/><path d="M15 9 V26 M10 14 L15 9 L20 14 M10 26 H20" stroke="#1E74E0" stroke-width="2.5" fill="none"/></svg>
<div class="a" style="left:606px;top:164px;width:2px;height:40px;background:#6B7590;"></div>
<div class="t" style="left:624px;top:173.60px;font-size:24px;color:#333;font-weight:400;transform:scaleX(0.9794);transform-origin:0 0;">Hex</div>
<svg class="a" style="left:686px;top:169px;" width="30" height="30" viewBox="0 0 30 30"><path d="M3 8 L8 3 L14 9 Q18 13 22 6" stroke="#333" stroke-width="2.5" fill="none"/><path d="M8 16 L14 10 M14 10 L22 18" stroke="#333" stroke-width="2.5"/><circle cx="22" cy="22" r="6" fill="#E3151A"/><rect x="19" y="19" width="6" height="6" fill="#fff"/></svg>
<div class="a" style="left:731px;top:164px;width:2px;height:40px;background:#6B7590;"></div>
<svg class="a" style="left:748px;top:169px;" width="30" height="30" viewBox="0 0 30 30"><circle cx="15" cy="15" r="13" fill="#1E6EC8"/><circle cx="15" cy="15" r="10" fill="#F1F4FA"/><rect x="5" y="12" width="20" height="6" fill="#E0B0B0"/><path d="M15 5 V25 M5 15 H25" stroke="#AA3030" stroke-width="1"/></svg>
<svg class="a" style="left:790px;top:180px;" width="14" height="8" viewBox="0 0 14 8"><path d="M0 0 H13 L6.5 7 Z" fill="#1B2A47"/></svg>
<svg class="a" style="left:862px;top:169px;" width="30" height="30" viewBox="0 0 30 30"><path d="M12 4 H28 M14 11 H28 M16 18 H28 M12 25 H28" stroke="#333" stroke-width="2.5"/><path d="M4 4 V18 H12 M8 14 L12 18 L8 22" stroke="#0E4F96" stroke-width="3" fill="none"/></svg>
<svg class="a" style="left:906px;top:169px;" width="30" height="30" viewBox="0 0 30 30"><rect x="2" y="5" width="26" height="20" fill="none" stroke="#333" stroke-width="2.5"/><text x="5" y="21" font-size="14" font-family="Liberation Mono" font-weight="bold" fill="#333">0X</text></svg>
<svg class="a" style="left:950px;top:169px;" width="30" height="30" viewBox="0 0 30 30"><rect x="3" y="8" width="24" height="14" fill="#333"/><rect x="7" y="12" width="16" height="6" fill="#CFD6E5"/><path d="M6 4 V8 M12 4 V8 M18 4 V8 M24 4 V8 M6 22 V26 M12 22 V26 M18 22 V26 M24 22 V26" stroke="#333" stroke-width="2.5"/></svg>
<svg class="a" style="left:994px;top:169px;" width="30" height="30" viewBox="0 0 30 30"><rect x="2" y="2" width="26" height="24" fill="#5A6E8E"/><rect x="2" y="2" width="26" height="5" fill="#2F6FD8"/><rect x="5" y="10" width="20" height="12" fill="#8A9AB5"/><path d="M6 26 V29 M10 26 V29 M14 26 V29 M18 26 V29 M22 26 V29" stroke="#333" stroke-width="2"/></svg>
<svg class="a" style="left:1038px;top:169px;" width="30" height="30" viewBox="0 0 30 30"><rect x="2" y="2" width="26" height="26" fill="#B7C4DA" stroke="#1B2A47" stroke-width="2"/><rect x="2" y="2" width="26" height="5" fill="#2F6FD8"/><path d="M7 8 V23 H15" stroke="#333" stroke-width="2" fill="none"/><circle cx="15" cy="13" r="4" fill="#E39A1A"/><circle cx="19" cy="22" r="4" fill="#2BA02B"/></svg>
<svg class="a" style="left:1129px;top:169px;" width="30" height="30" viewBox="0 0 30 30"><path d="M15 2 V12 M9 7 L15 13 L21 7" stroke="#333" stroke-width="4" fill="none"/><path d="M2 13 V27 H28 V13" stroke="#333" stroke-width="3" fill="none"/><rect x="6" y="15" width="4" height="4" fill="#333"/><rect x="13" y="15" width="4" height="4" fill="#333"/><rect x="20" y="15" width="4" height="4" fill="#333"/><rect x="2" y="21" width="26" height="6" fill="#333"/></svg>
<svg class="a" style="left:1173px;top:169px;" width="30" height="30" viewBox="0 0 30 30"><path d="M15 2 V12 M9 7 L15 13 L21 7" stroke="#333" stroke-width="4" fill="none"/><path d="M2 13 V27 H28 V13" stroke="#333" stroke-width="3" fill="none"/><rect x="6" y="15" width="4" height="4" fill="#333"/><rect x="13" y="15" width="4" height="4" fill="#333"/><rect x="20" y="15" width="4" height="4" fill="#333"/><rect x="2" y="21" width="26" height="6" fill="#333"/></svg>
<div class="a" style="left:1216px;top:164px;width:2px;height:40px;background:#6B7590;"></div>
<svg class="a" style="left:1232px;top:169px;" width="30" height="30" viewBox="0 0 30 30"><path d="M2 13 V27 H28 V13" stroke="#B9BEC8" stroke-width="3" fill="none"/><rect x="6" y="15" width="4" height="4" fill="#B9BEC8"/><rect x="13" y="15" width="4" height="4" fill="#B9BEC8"/><rect x="20" y="15" width="4" height="4" fill="#B9BEC8"/><path d="M8 2 L22 12 M22 2 L8 12" stroke="#B9BEC8" stroke-width="2"/></svg>
<svg class="a" style="left:1324px;top:169px;" width="30" height="30" viewBox="0 0 30 30"><rect x="2" y="9" width="26" height="12" fill="#B9BEC8"/><path d="M4 5 V9 M9 5 V9 M14 5 V9 M19 5 V9 M24 5 V9 M4 21 V25 M9 21 V25 M14 21 V25 M19 21 V25 M24 21 V25" stroke="#B9BEC8" stroke-width="2"/></svg>
<div class="t" style="left:1362px;top:173.60px;font-size:24px;color:#7E8490;font-weight:400;transform:scaleX(0.9577);transform-origin:0 0;">ATmega2560</div>
<svg class="a" style="left:1521px;top:169px;" width="30" height="30" viewBox="0 0 30 30"><rect x="8" y="3" width="14" height="6" fill="#B9BEC8"/><rect x="13" y="9" width="5" height="19" fill="#B9BEC8"/></svg>
<div class="t" style="left:1560px;top:173.60px;font-size:24px;color:#7E8490;font-weight:400;transform:scaleX(1.0111);transform-origin:0 0;">Simulator</div>
<div class="a" style="left:14px;top:224px;width:1387px;height:40px;background:#364E6F;"></div>
<div class="a" style="left:393px;top:224px;width:167px;height:40px;background:#FFF29D;"></div>
<div class="a" style="left:14px;top:264px;width:1710px;height:4px;background:#FFF29D;"></div>
<div class="t" style="left:23px;top:235.60px;font-size:24px;color:#FFFFFF;font-weight:400;transform:scaleX(1.0012);transform-origin:0 0;">regtest.h</div>
<div class="t" style="left:214px;top:235.60px;font-size:24px;color:#FFFFFF;font-weight:400;transform:scaleX(0.9865);transform-origin:0 0;">regtest.c</div>
<div class="t" style="left:569px;top:235.60px;font-size:24px;color:#FFFFFF;font-weight:400;transform:scaleX(0.9252);transform-origin:0 0;">tasks.c</div>
<div class="t" style="left:735px;top:235.60px;font-size:24px;color:#FFFFFF;font-weight:400;transform:scaleX(1.0046);transform-origin:0 0;">port.c</div>
<div class="t" style="left:892px;top:235.60px;font-size:24px;color:#FFFFFF;font-weight:400;transform:scaleX(1.0128);transform-origin:0 0;">portmacro.h</div>
<div class="t" style="left:1120px;top:235.60px;font-size:24px;color:#FFFFFF;font-weight:400;transform:scaleX(0.9381);transform-origin:0 0;">FreeRTOSConfig.h</div>
<div class="t" style="left:1500px;top:235.60px;font-size:24px;color:#FFFFFF;font-weight:400;transform:scaleX(1.0180);transform-origin:0 0;">projdefs.h</div>
<div class="t" style="left:402px;top:235.60px;font-size:24px;color:#000;font-weight:400;transform:scaleX(0.9832);transform-origin:0 0;">main.c</div>
<svg class="a" style="left:492px;top:239px;" width="17" height="15" viewBox="0 0 17 15"><path d="M0 7 H8" stroke="#6B5B35" stroke-width="2"/><rect x="8.5" y="2.5" width="7" height="8" fill="none" stroke="#6B5B35" stroke-width="2.2"/><path d="M8 0 V14" stroke="#6B5B35" stroke-width="2"/></svg>
<svg class="a" style="left:528px;top:238px;" width="20" height="17" viewBox="0 0 20 17"><path d="M2 1 L18 16 M18 1 L2 16" stroke="#6B5B35" stroke-width="2.6"/></svg>
<svg class="a" style="left:1623px;top:238px;" width="25" height="18" viewBox="0 0 25 18"><rect x="5" y="8" width="15" height="8" fill="#D0D5DF"/><rect x="3" y="15" width="19" height="2.5" fill="#D0D5DF"/><path d="M1 1 L5 5 M7 0 V5 M0 7 H4" stroke="#D0D5DF" stroke-width="1.6"/></svg>
<svg class="a" style="left:1664px;top:238px;" width="20" height="17" viewBox="0 0 20 17"><path d="M2 1 L18 16 M18 1 L2 16" stroke="#D0D5DF" stroke-width="2.6"/></svg>
<svg class="a" style="left:1702px;top:244px;" width="16" height="9" viewBox="0 0 16 9"><path d="M0 0 H15 L7.5 8 Z" fill="#D0D5DF"/></svg>
<div class="a" style="left:14px;top:268px;width:1710px;height:1812px;background:#8E9BBC;"></div>
<div class="a" style="left:16px;top:268px;width:1706px;height:40px;background:#2D3D5C;"></div>
<div class="a" style="left:16px;top:269px;width:1645px;height:38px;background:#FCFCFC;"></div>
<div class="a" style="left:384px;top:269px;width:2px;height:38px;background:#C5CCDB;"></div>
<div class="a" style="left:387px;top:270px;width:31px;height:17px;background:#FCFCFC;outline:2px solid #C5CCDB;outline-offset:-2px;"></div>
<div class="a" style="left:387px;top:288px;width:31px;height:18px;background:#FCFCFC;outline:2px solid #C5CCDB;outline-offset:-2px;"></div>
<svg class="a" style="left:397px;top:275px;" width="11" height="6" viewBox="0 0 11 6"><path d="M0 6 H10 L5 0 Z" fill="#000"/></svg>
<svg class="a" style="left:397px;top:294px;" width="11" height="6" viewBox="0 0 11 6"><path d="M0 0 H10 L5 6 Z" fill="#000"/></svg>
<div class="a" style="left:419px;top:268px;width:5px;height:40px;background:#2D3D5C;"></div>
<div class="a" style="left:1661px;top:268px;width:61px;height:40px;background:#CFD6E5;"></div>
<svg class="a" style="left:22px;top:278px;" width="24" height="18" viewBox="0 0 24 18"><path d="M1 7 H12 V1 L22 9 L12 17 V11 H1 Z" fill="#C8821E"/></svg>
<svg class="a" style="left:428px;top:278px;" width="24" height="18" viewBox="0 0 24 18"><path d="M1 7 H12 V1 L22 9 L12 17 V11 H1 Z" fill="#C8821E"/></svg>
<div class="t" style="left:56px;top:275.60px;font-size:24px;color:#1E1E1E;font-weight:400;transform:scaleX(0.8393);transform-origin:0 0;">vErrorChecks.for</div>
<div class="t" style="left:464px;top:275.60px;font-size:24px;color:#1E1E1E;font-weight:400;transform:scaleX(0.8490);transform-origin:0 0;">for( ;; )</div>
<svg class="a" style="left:362px;top:284px;" width="14" height="8" viewBox="0 0 14 8"><path d="M0 0 H13 L6.5 7 Z" fill="#000"/></svg>
<svg class="a" style="left:1637px;top:284px;" width="14" height="8" viewBox="0 0 14 8"><path d="M0 0 H13 L6.5 7 Z" fill="#000"/></svg>
<svg class="a" style="left:1666px;top:273px;" width="26" height="30" viewBox="0 0 26 30"><defs><linearGradient id="ga" x1="0" x2="1"><stop offset="0" stop-color="#7DE85A"/><stop offset="1" stop-color="#1E8F1E"/></linearGradient></defs><path d="M11 28 Q1 22 2 14 Q4 7 14 6 V1 L24 8 L16 17 V11 Q9 12 8 16 Q8 21 12 23 Z" fill="url(#ga)"/></svg>
<div class="t" style="left:1688px;top:275.60px;font-size:24px;color:#1E1E1E;font-weight:400;transform:scaleX(0.8901);transform-origin:0 0;">Go</div>
<div class="a" style="left:16px;top:308px;width:1672px;height:1736px;background:#FFFFFF;"></div>
<div class="a" style="left:16px;top:308px;width:37px;height:1736px;background:#E6E7E8;"></div>
<div class="a" style="left:1688px;top:308px;width:34px;height:1736px;background:#E8E8EC;"></div>
<div class="a" style="left:1689px;top:309px;width:32px;height:32px;background:#E8EEF9;outline:1px solid #B5BFD3;"></div>
<svg class="a" style="left:1690px;top:306px;" width="30" height="30" viewBox="0 0 30 30"><path d="M4 17 H26 M4 22 H26" stroke="#1B2A47" stroke-width="2.5"/><path d="M15 4 V15 M10 9 L15 4 L20 9 M15 24 V28" stroke="#1B2A47" stroke-width="2" fill="none"/><path d="M10 24 L15 29 L20 24" stroke="#1B2A47" stroke-width="2" fill="none"/></svg>
<svg class="a" style="left:1696px;top:354px;" width="18" height="10" viewBox="0 0 18 10"><path d="M0 9 H17 L8.5 0 Z" fill="#868999"/></svg>
<svg class="a" style="left:1696px;top:2022px;" width="18" height="10" viewBox="0 0 18 10"><path d="M0 0 H17 L8.5 9 Z" fill="#868999"/></svg>
<div class="a" style="left:1696px;top:736px;width:18px;height:257px;background:#C8C8D0;"></div>
<div class="a" style="left:1690px;top:652px;width:7px;height:8px;background:#6CE26C;"></div>
<div class="a" style="left:1690px;top:667px;width:7px;height:16px;background:#6CE26C;"></div>
<div class="a" style="left:1690px;top:751px;width:7px;height:8px;background:#6CE26C;"></div>
<div class="a" style="left:1690px;top:780px;width:7px;height:20px;background:#6CE26C;"></div>
<div class="a" style="left:1690px;top:889px;width:7px;height:18px;background:#6CE26C;"></div>
<div class="a" style="left:1690px;top:935px;width:7px;height:31px;background:#6CE26C;"></div>
<div class="a" style="left:1690px;top:1060px;width:7px;height:9px;background:#6CE26C;"></div>
<div class="a" style="left:1690px;top:1665px;width:7px;height:8px;background:#6CE26C;"></div>
<div class="a" style="left:1711px;top:762px;width:11px;height:12px;background:#FF0000;"></div>
<div class="a" style="left:1700px;top:948px;width:10px;height:21px;background:#8B3A3A;"></div>
<div class="a" style="left:1689px;top:962px;width:33px;height:3px;background:#0000CD;"></div>
<div class="a" style="left:174px;top:1804.0px;width:1513px;height:37.0px;border:3.5px solid #E8E8F0;box-sizing:border-box;"></div>
<div class="a" style="left:177px;top:1692.0px;width:615px;height:36.59999999999991px;background:#A8616A;"></div>
<div class="a" style="left:177px;top:1803.5px;width:616px;height:38.5px;background:#FFF07F;border:2.5px solid #0000FF;box-sizing:border-box;"></div>
<div class="m" style="left:60px;width:71px;text-align:right;top:312.34px;color:#2B91AF;">43</div>
<div class="m" style="left:178.00px;top:312.34px;"><span style="color:#008000;">/* The task function for the &quot;Check&quot; task. */</span></div>
<div class="m" style="left:60px;width:71px;text-align:right;top:349.74px;color:#2B91AF;">44</div>
<div class="m" style="left:178.00px;top:349.74px;"><span style="color:#0000FF;">static</span> <span style="color:#0000FF;">void</span> <span style="color:#880000;">vErrorChecks</span>( <span style="color:#0000FF;">void</span> *<span style="color:#000080;">pvParameters</span> );</div>
<div class="m" style="left:60px;width:71px;text-align:right;top:387.14px;color:#2B91AF;">45</div>
<div class="m" style="left:60px;width:71px;text-align:right;top:424.54px;color:#2B91AF;">46</div>
<div class="m" style="left:178.00px;top:424.54px;"><span style="color:#0000FF;">int</span> <span style="color:#880000;">main</span>(<span style="color:#0000FF;">void</span>)</div>
<div class="m" style="left:60px;width:71px;text-align:right;top:461.94px;color:#2B91AF;">47</div>
<div class="m" style="left:178.00px;top:461.94px;">{</div>
<div class="m" style="left:60px;width:71px;text-align:right;top:499.34px;color:#2B91AF;">48</div>
<div class="m" style="left:178.00px;top:499.34px;"><span style="color:#008000;">    /* Initializes MCU, drivers and middleware.</span></div>
<div class="m" style="left:60px;width:71px;text-align:right;top:536.74px;color:#2B91AF;">49</div>
<div class="m" style="left:178.00px;top:536.74px;"><span style="color:#008000;">       This is generated from Atmel START project. */</span></div>
<div class="m" style="left:60px;width:71px;text-align:right;top:574.14px;color:#2B91AF;">50</div>
<div class="m" style="left:178.00px;top:574.14px;">    <span style="color:#880000;">atmel_start_init</span>();</div>
<div class="m" style="left:60px;width:71px;text-align:right;top:611.54px;color:#2B91AF;">51</div>
<div class="m" style="left:60px;width:71px;text-align:right;top:648.94px;color:#2B91AF;">52</div>
<div class="m" style="left:178.00px;top:648.94px;"><span style="color:#008000;">    /* Standard tests. */</span></div>
<div class="m" style="left:60px;width:71px;text-align:right;top:686.34px;color:#2B91AF;">53</div>
<div class="m" style="left:178.00px;top:686.34px;">    <span style="color:#880000;">vStartRegTestTasks</span>();</div>
<div class="m" style="left:60px;width:71px;text-align:right;top:723.74px;color:#2B91AF;">54</div>
<div class="m" style="left:60px;width:71px;text-align:right;top:761.14px;color:#2B91AF;">55</div>
<div class="m" style="left:178.00px;top:761.14px;"><span style="color:#008000;">    /* Create the tasks defined within this file. */</span></div>
<div class="m" style="left:60px;width:71px;text-align:right;top:798.54px;color:#2B91AF;">56</div>
<div class="m" style="left:178.00px;top:798.54px;">    <span style="color:#6F008A;">xTaskCreate</span>( <span style="color:#880000;">vErrorChecks</span>, <span style="color:#A31515;">&quot;Check&quot;</span>, <span style="color:#6F008A;">configMINIMAL_STACK_SIZE</span>, <span style="color:#6F008A;font-style:italic;">NULL</span>, <span style="color:#6F008A;">mainCHECK_TASK_PRIORITY</span>,</div>
<div class="m" style="left:60px;width:71px;text-align:right;top:873.34px;color:#2B91AF;">57</div>
<div class="m" style="left:60px;width:71px;text-align:right;top:910.74px;color:#2B91AF;">58</div>
<div class="m" style="left:178.00px;top:910.74px;"><span style="color:#008000;">    /* In this port, to use preemptive scheduler define configUSE_PREEMPTION</span></div>
<div class="m" style="left:60px;width:71px;text-align:right;top:948.14px;color:#2B91AF;">59</div>
<div class="m" style="left:178.00px;top:948.14px;"><span style="color:#008000;">    as 1 in portmacro.h.  To use the cooperative scheduler define</span></div>
<div class="m" style="left:60px;width:71px;text-align:right;top:985.54px;color:#2B91AF;">60</div>
<div class="m" style="left:178.00px;top:985.54px;"><span style="color:#008000;">    configUSE_PREEMPTION as 0. */</span></div>
<div class="m" style="left:60px;width:71px;text-align:right;top:1022.94px;color:#2B91AF;">61</div>
<div class="m" style="left:178.00px;top:1022.94px;">    <span style="color:#880000;">vTaskStartScheduler</span>();</div>
<div class="m" style="left:60px;width:71px;text-align:right;top:1060.34px;color:#2B91AF;">62</div>
<div class="m" style="left:178.00px;top:1060.34px;">}</div>
<div class="m" style="left:60px;width:71px;text-align:right;top:1097.74px;color:#2B91AF;">63</div>
<div class="m" style="left:60px;width:71px;text-align:right;top:1135.14px;color:#2B91AF;">64</div>
<div class="m" style="left:178.00px;top:1135.14px;"><span style="color:#008000;">/*-----------------------------------------------------------*/</span></div>
<div class="m" style="left:60px;width:71px;text-align:right;top:1172.54px;color:#2B91AF;">65</div>
<div class="m" style="left:60px;width:71px;text-align:right;top:1209.94px;color:#2B91AF;">66</div>
<div class="m" style="left:178.00px;top:1209.94px;"><span style="color:#0000FF;">static</span> <span style="color:#0000FF;">void</span> <span style="color:#880000;">vErrorChecks</span>( <span style="color:#0000FF;">void</span> *<span style="color:#000080;">pvParameters</span> )</div>
<div class="m" style="left:60px;width:71px;text-align:right;top:1247.34px;color:#2B91AF;">67</div>
<div class="m" style="left:178.00px;top:1247.34px;">{</div>
<div class="m" style="left:60px;width:71px;text-align:right;top:1284.74px;color:#2B91AF;">68</div>
<div class="m" style="left:178.00px;top:1284.74px;"><span style="color:#0000FF;">static</span> <span style="color:#2A85A0;">UBaseType_t</span> <span style="color:#000080;">uxErrorHasOccurred</span> = 0;</div>
<div class="m" style="left:60px;width:71px;text-align:right;top:1322.14px;color:#2B91AF;">69</div>
<div class="m" style="left:60px;width:71px;text-align:right;top:1359.54px;color:#2B91AF;">70</div>
<div class="m" style="left:178.00px;top:1359.54px;"><span style="color:#008000;">    /* The parameters are not used. */</span></div>
<div class="m" style="left:60px;width:71px;text-align:right;top:1396.94px;color:#2B91AF;">71</div>
<div class="m" style="left:178.00px;top:1396.94px;">    ( <span style="color:#0000FF;">void</span> ) <span style="color:#000080;">pvParameters</span>;</div>
<div class="m" style="left:60px;width:71px;text-align:right;top:1434.34px;color:#2B91AF;">72</div>
<div class="m" style="left:60px;width:71px;text-align:right;top:1471.74px;color:#2B91AF;">73</div>
<div class="m" style="left:178.00px;top:1471.74px;"><span style="color:#008000;">    /* Cycle for ever, delaying then checking all the other tasks are still</span></div>
<div class="m" style="left:60px;width:71px;text-align:right;top:1509.14px;color:#2B91AF;">74</div>
<div class="m" style="left:178.00px;top:1509.14px;"><span style="color:#008000;">    operating without error. */</span></div>
<div class="m" style="left:60px;width:71px;text-align:right;top:1546.54px;color:#2B91AF;">75</div>
<div class="m" style="left:178.00px;top:1546.54px;">    <span style="color:#0000FF;">for</span>( ;; )</div>
<div class="m" style="left:60px;width:71px;text-align:right;top:1583.94px;color:#2B91AF;">76</div>
<div class="m" style="left:178.00px;top:1583.94px;">    {</div>
<div class="m" style="left:60px;width:71px;text-align:right;top:1621.34px;color:#2B91AF;">77</div>
<div class="m" style="left:178.00px;top:1621.34px;">        <span style="color:#0000FF;">if</span>( <span style="color:#880000;">xAreRegTestTasksStillRunning</span>() != <span style="color:#6F008A;">pdTRUE</span> )</div>
<div class="m" style="left:60px;width:71px;text-align:right;top:1658.74px;color:#2B91AF;">78</div>
<div class="m" style="left:178.00px;top:1658.74px;">        {</div>
<div class="m" style="left:60px;width:71px;text-align:right;top:1696.14px;color:#2B91AF;">79</div>
<div class="m" style="left:60px;width:71px;text-align:right;top:1733.54px;color:#2B91AF;">80</div>
<div class="m" style="left:178.00px;top:1733.54px;">        }</div>
<div class="m" style="left:60px;width:71px;text-align:right;top:1770.94px;color:#2B91AF;">81</div>
<div class="m" style="left:60px;width:71px;text-align:right;top:1808.34px;color:#2B91AF;">82</div>
<div class="m" style="left:60px;width:71px;text-align:right;top:1845.74px;color:#2B91AF;">83</div>
<div class="m" style="left:178.00px;top:1845.74px;">    }</div>
<div class="m" style="left:60px;width:71px;text-align:right;top:1883.14px;color:#2B91AF;">84</div>
<div class="m" style="left:178.00px;top:1883.14px;">}</div>
<div class="m" style="left:60px;width:71px;text-align:right;top:1920.54px;color:#2B91AF;">85</div>
<div class="m" style="left:60px;width:71px;text-align:right;top:1957.94px;color:#2B91AF;">86</div>
<div class="m" style="left:178.00px;top:1957.94px;"><span style="color:#008000;">/*-----------------------------------------------------------*/</span></div>
<div class="m" style="left:60px;width:71px;text-align:right;top:1995.34px;color:#2B91AF;">87</div>
<div class="m" style="left:60px;width:71px;text-align:right;top:2032.74px;color:#2B91AF;">88</div>
<div class="m" style="left:178.00px;top:2032.74px;"><span style="color:#0000FF;">void</span> <span style="color:#880000;">vApplicationIdleHook</span>( <span style="color:#0000FF;">void</span> )</div>
<div class="m" style="left:288.04px;top:835.94px;"><span style="color:#6F008A;font-style:italic;">NULL</span> );</div>
<div class="m" style="left:178.00px;top:1696.14px;"><span style="color:#FFFFFF;">            uxErrorHasOccurred |= 0x0U;</span></div>
<div class="m" style="left:178.00px;top:1808.34px;"><span style="color:#000000;">        vTaskDelay( mainCHECK_PERIOD );</span></div>
<svg class="a" style="left:743px;top:524px;" width="159" height="5" viewBox="0 0 159 5"><path d="M0 3 L3.0 0 L6.0 3 L9.0 0 L12.0 3 L15.0 0 L18.0 3 L21.0 0 L24.0 3 L27.0 0 L30.0 3 L33.0 0 L36.0 3 L39.0 0 L42.0 3 L45.0 0 L48.0 3 L51.0 0 L54.0 3 L57.0 0 L60.0 3 L63.0 0 L66.0 3 L69.0 0 L72.0 3 L75.0 0 L78.0 3 L81.0 0 L84.0 3 L87.0 0 L90.0 3 L93.0 0 L96.0 3 L99.0 0 L102.0 3 L105.0 0 L108.0 3 L111.0 0 L114.0 3 L117.0 0 L120.0 3 L123.0 0 L126.0 3 L129.0 0 L132.0 3 L135.0 0 L138.0 3 L141.0 0 L144.0 3 L147.0 0 L150.0 3 L153.0 0 L156.0 3" stroke="#E51400" stroke-width="1.5" fill="none"/></svg>
<div class="a" style="left:137px;top:345.4px;width:12px;height:37.400000000000034px;background:#6CE26C;"></div>
<div class="a" style="left:137px;top:569.8px;width:12px;height:149.60000000000002px;background:#6CE26C;"></div>
<div class="a" style="left:137px;top:1243.0px;width:12px;height:112.20000000000005px;background:#6CE26C;"></div>
<div class="a" style="left:137px;top:1542.2px;width:12px;height:261.79999999999995px;background:#6CE26C;"></div>
<div class="a" style="left:163.5px;top:449.2px;width:2.0px;height:642.2px;background:#A5A5A5;"></div>
<div class="a" style="left:163.5px;top:1089.4px;width:14.5px;height:2.0px;background:#A5A5A5;"></div>
<svg class="a" style="left:154px;top:430px;" width="20" height="20" viewBox="0 0 20 20"><rect x="1" y="1" width="18" height="18" fill="#fff" stroke="#A5A5A5" stroke-width="2"/><path d="M5 10 H15" stroke="#555" stroke-width="2"/></svg>
<div class="a" style="left:163.5px;top:1016.6px;width:14.5px;height:2.0px;background:#A5A5A5;"></div>
<svg class="a" style="left:154px;top:916px;" width="20" height="20" viewBox="0 0 20 20"><rect x="1" y="1" width="18" height="18" fill="#fff" stroke="#A5A5A5" stroke-width="2"/><path d="M5 10 H15" stroke="#555" stroke-width="2"/></svg>
<div class="a" style="left:163.5px;top:1234.6px;width:2.0px;height:679.6000000000001px;background:#A5A5A5;"></div>
<div class="a" style="left:163.5px;top:1912.2px;width:14.5px;height:2.0px;background:#A5A5A5;"></div>
<svg class="a" style="left:154px;top:1215px;" width="20" height="20" viewBox="0 0 20 20"><rect x="1" y="1" width="18" height="18" fill="#fff" stroke="#A5A5A5" stroke-width="2"/><path d="M5 10 H15" stroke="#555" stroke-width="2"/></svg>
<svg class="a" style="left:154px;top:2038px;" width="20" height="20" viewBox="0 0 20 20"><rect x="1" y="1" width="18" height="18" fill="#fff" stroke="#A5A5A5" stroke-width="2"/><path d="M5 10 H15" stroke="#555" stroke-width="2"/></svg>
<svg class="a" style="left:18px;top:1692px;" width="34" height="34" viewBox="0 0 34 34"><circle cx="17" cy="17" r="16" fill="#fff" stroke="#9B3B3B" stroke-width="1"/><circle cx="17" cy="17" r="13.3" fill="#E51400"/></svg>
<svg class="a" style="left:18px;top:1805px;" width="34" height="34" viewBox="0 0 34 34"><circle cx="17" cy="17" r="16" fill="#fff" stroke="#9B3B3B" stroke-width="1"/><circle cx="17" cy="17" r="13.3" fill="#E51400"/><path d="M6 12 H16 V6 L29 17 L16 28 V22 H6 Z" fill="#FFD23A" stroke="#2D3D5C" stroke-width="2"/></svg>
<div class="a" style="left:16px;top:2044px;width:1706px;height:34px;background:#E8E8EC;"></div>
<div class="a" style="left:16px;top:2044px;width:120px;height:34px;background:#B9C3D9;"></div>
<div class="a" style="left:18px;top:2046px;width:116px;height:30px;background:#FCFCFC;"></div>
<div class="t" style="left:21px;top:2051.30px;font-size:22px;color:#000;font-weight:400;">110 %</div>
<svg class="a" style="left:117px;top:2058px;" width="14" height="8" viewBox="0 0 14 8"><path d="M0 0 H13 L6.5 7 Z" fill="#1B2A47"/></svg>
<svg class="a" style="left:146px;top:2052px;" width="10" height="19" viewBox="0 0 10 19"><path d="M9 0 V18 L0 9 Z" fill="#C6C6CE"/></svg>
<svg class="a" style="left:1666px;top:2052px;" width="10" height="19" viewBox="0 0 10 19"><path d="M0 0 V18 L9 9 Z" fill="#C6C6CE"/></svg>
<div class="a" style="left:1736px;top:224px;width:131px;height:40px;background:#4D6082;"></div>
<div class="a" style="left:1867px;top:224px;width:228px;height:40px;background:#364E6F;"></div>
<div class="a" style="left:1736px;top:264px;width:1390px;height:4px;background:#4D6082;"></div>
<div class="t" style="left:1745px;top:235.60px;font-size:24px;color:#FFFFFF;font-weight:400;transform:scaleX(1.0404);transform-origin:0 0;">I/O</div>
<svg class="a" style="left:1798px;top:239px;" width="17" height="15" viewBox="0 0 17 15"><path d="M0 7 H8" stroke="#D0D5DF" stroke-width="2"/><rect x="8.5" y="2.5" width="7" height="8" fill="none" stroke="#D0D5DF" stroke-width="2.2"/><path d="M8 0 V14" stroke="#D0D5DF" stroke-width="2"/></svg>
<svg class="a" style="left:1834px;top:238px;" width="20" height="17" viewBox="0 0 20 17"><path d="M2 1 L18 16 M18 1 L2 16" stroke="#D0D5DF" stroke-width="2.6"/></svg>
<div class="t" style="left:1876px;top:235.60px;font-size:24px;color:#FFFFFF;font-weight:400;transform:scaleX(0.9571);transform-origin:0 0;">Disassembly</div>
<svg class="a" style="left:3101px;top:244px;" width="16" height="9" viewBox="0 0 16 9"><path d="M0 0 H15 L7.5 8 Z" fill="#D0D5DF"/></svg>
<div class="a" style="left:1736px;top:268px;width:1390px;height:1812px;background:#8E9BBC;"></div>
<div class="a" style="left:1738px;top:268px;width:1386px;height:52px;background:#CFD6E5;"></div>
<div class="a" style="left:1738px;top:320px;width:1386px;height:2px;background:#7D828C;"></div>
<div class="a" style="left:1747px;top:273px;width:42px;height:42px;background:#E5C365;"></div>
<div class="a" style="left:1749px;top:275px;width:38px;height:38px;background:#FFF3C8;"></div>
<div class="a" style="left:1791px;top:273px;width:43px;height:42px;background:#E5C365;"></div>
<div class="a" style="left:1793px;top:275px;width:39px;height:38px;background:#FFF3C8;"></div>
<svg class="a" style="left:1752px;top:279px;" width="32" height="30" viewBox="0 0 32 30"><rect x="1" y="1" width="30" height="27" fill="#A9B8D0" stroke="#2B3A55" stroke-width="2"/><rect x="1" y="1" width="30" height="5" fill="#2F6FD8"/><rect x="6" y="11" width="20" height="8" fill="#6A7DA0"/></svg>
<svg class="a" style="left:1797px;top:279px;" width="32" height="30" viewBox="0 0 32 30"><rect x="1" y="1" width="30" height="27" fill="#A9B8D0" stroke="#2B3A55" stroke-width="2"/><rect x="1" y="1" width="30" height="5" fill="#2F6FD8"/><rect x="6" y="16" width="20" height="8" fill="#6A7DA0"/></svg>
<div class="a" style="left:1840px;top:277px;width:2px;height:34px;background:#6B7590;"></div>
<div class="t" style="left:1857px;top:283.60px;font-size:24px;color:#1E1E1E;font-weight:400;transform:scaleX(0.9583);transform-origin:0 0;">Filter:</div>
<div class="a" style="left:1927px;top:275px;width:298px;height:38px;background:#C5CCDB;"></div>
<div class="a" style="left:1929px;top:277px;width:294px;height:34px;background:#FCFCFC;"></div>
<svg class="a" style="left:2205px;top:291px;" width="14" height="8" viewBox="0 0 14 8"><path d="M0 0 H13 L6.5 7 Z" fill="#1B2A47"/></svg>
<div class="a" style="left:2238px;top:277px;width:2px;height:34px;background:#6B7590;"></div>
<div class="a" style="left:2249px;top:273px;width:43px;height:42px;background:#E5C365;"></div>
<div class="a" style="left:2251px;top:275px;width:39px;height:38px;background:#FFF3C8;"></div>
<svg class="a" style="left:2254px;top:279px;" width="34" height="34" viewBox="0 0 34 34"><rect x="3" y="24" width="28" height="7" fill="#8B1F1F"/><rect x="3" y="18" width="6" height="3" fill="#8B1F1F"/><path d="M10 20 Q18 10 28 4 L31 8 Q22 16 14 22 Z" fill="#B8403A"/><path d="M26 3 L32 8" stroke="#E3C13A" stroke-width="3"/></svg>
<div class="a" style="left:1738px;top:322px;width:2px;height:870px;background:#82868F;"></div>
<div class="a" style="left:1740px;top:322px;width:1384px;height:870px;background:#FFFFFF;"></div>
<div class="a" style="left:1740px;top:322px;width:1384px;height:40px;background:#F0F0F0;"></div>
<div class="a" style="left:2139px;top:323px;width:2px;height:39px;background:#DCDCDC;"></div>
<div class="a" style="left:2289px;top:323px;width:2px;height:39px;background:#DCDCDC;"></div>
<div class="t" style="left:1640px;width:600px;text-align:center;top:329.60px;font-size:24px;color:#000;font-weight:400;">Name</div>
<div class="t" style="left:1915px;width:600px;text-align:center;top:329.60px;font-size:24px;color:#000;font-weight:400;">Value</div>
<div class="a" style="left:3088px;top:362px;width:36px;height:830px;background:#E8E8EC;"></div>
<svg class="a" style="left:3097px;top:373px;" width="18" height="10" viewBox="0 0 18 10"><path d="M0 9 H17 L8.5 0 Z" fill="#C2C3C9"/></svg>
<svg class="a" style="left:3097px;top:1171px;" width="18" height="10" viewBox="0 0 18 10"><path d="M0 0 H17 L8.5 9 Z" fill="#868999"/></svg>
<div class="a" style="left:3096px;top:597px;width:18px;height:512px;background:#C2C3C9;"></div>
<div class="a" style="left:1740px;top:362px;width:1348px;height:830px;overflow:hidden;">
<svg class="a" style="left:24px;top:-3px;" width="18" height="18" viewBox="0 0 18 18"><defs><linearGradient id="eg" x1="0" y1="0" x2="0" y2="1"><stop offset="0" stop-color="#FFFFFF"/><stop offset="1" stop-color="#D8CFC0"/></linearGradient></defs><rect x="1" y="1" width="16" height="16" rx="3" fill="url(#eg)" stroke="#7894B4" stroke-width="2"/><path d="M4 9 H14 M9 4 V14" stroke="#000" stroke-width="2.2"/></svg>
<svg class="a" style="left:52px;top:-10px;" width="32" height="32" viewBox="0 0 32 32"><rect width="32" height="32" fill="#D4F0F0"/><rect x="6" y="3" width="20" height="24" fill="#E8F6F6" stroke="#222" stroke-width="2.5"/><path d="M10 9 H22 M10 13 H22 M10 17 H22 M10 21 H22" stroke="#333" stroke-width="2"/></svg>
<div class="t" style="left:89px;top:-3.40px;font-size:24px;color:#000;font-weight:400;transform:scaleX(0.8821);transform-origin:0 0;">EEPROM (EEPROM)</div>
<svg class="a" style="left:24px;top:31px;" width="18" height="18" viewBox="0 0 18 18"><defs><linearGradient id="eg" x1="0" y1="0" x2="0" y2="1"><stop offset="0" stop-color="#FFFFFF"/><stop offset="1" stop-color="#D8CFC0"/></linearGradient></defs><rect x="1" y="1" width="16" height="16" rx="3" fill="url(#eg)" stroke="#7894B4" stroke-width="2"/><path d="M4 9 H14 M9 4 V14" stroke="#000" stroke-width="2.2"/></svg>
<svg class="a" style="left:52px;top:24px;" width="32" height="32" viewBox="0 0 32 32"><rect width="32" height="32" fill="#1BBDF0"/><rect width="32" height="12" fill="#5BD2F5"/><path d="M8 24 Q7 12 14 6 Q20 2 24 7 Q24 14 20 24 Z" fill="#fff"/><path d="M7 25 Q12 29 19 26" stroke="#fff" stroke-width="2" fill="none"/></svg>
<div class="t" style="left:89px;top:30.60px;font-size:24px;color:#000;font-weight:400;transform:scaleX(0.9622);transform-origin:0 0;">External Interrupts (EXINT)</div>
<svg class="a" style="left:52px;top:58px;" width="32" height="32" viewBox="0 0 32 32"><rect width="32" height="32" fill="#8DC63F"/><rect width="32" height="11" fill="#B1DA7E"/><rect x="4" y="8" width="4" height="14" fill="#2F4A1A"/><path d="M14 22 L18 8" stroke="#2F4A1A" stroke-width="2.5"/><ellipse cx="23.5" cy="15" rx="4.5" ry="6" fill="none" stroke="#2F4A1A" stroke-width="3"/></svg>
<div class="t" style="left:89px;top:64.60px;font-size:24px;color:#000;font-weight:400;transform:scaleX(0.9364);transform-origin:0 0;">I/O Port (PORTA)</div>
<svg class="a" style="left:52px;top:92px;" width="32" height="32" viewBox="0 0 32 32"><rect width="32" height="32" fill="#8DC63F"/><rect width="32" height="11" fill="#B1DA7E"/><rect x="4" y="8" width="4" height="14" fill="#2F4A1A"/><path d="M14 22 L18 8" stroke="#2F4A1A" stroke-width="2.5"/><ellipse cx="23.5" cy="15" rx="4.5" ry="6" fill="none" stroke="#2F4A1A" stroke-width="3"/></svg>
<div class="t" style="left:89px;top:98.60px;font-size:24px;color:#000;font-weight:400;transform:scaleX(0.9276);transform-origin:0 0;">I/O Port (PORTB)</div>
<svg class="a" style="left:52px;top:126px;" width="32" height="32" viewBox="0 0 32 32"><rect width="32" height="32" fill="#8DC63F"/><rect width="32" height="11" fill="#B1DA7E"/><rect x="4" y="8" width="4" height="14" fill="#2F4A1A"/><path d="M14 22 L18 8" stroke="#2F4A1A" stroke-width="2.5"/><ellipse cx="23.5" cy="15" rx="4.5" ry="6" fill="none" stroke="#2F4A1A" stroke-width="3"/></svg>
<div class="t" style="left:89px;top:132.60px;font-size:24px;color:#000;font-weight:400;transform:scaleX(0.9210);transform-origin:0 0;">I/O Port (PORTC)</div>
<svg class="a" style="left:52px;top:160px;" width="32" height="32" viewBox="0 0 32 32"><rect width="32" height="32" fill="#8DC63F"/><rect width="32" height="11" fill="#B1DA7E"/><rect x="4" y="8" width="4" height="14" fill="#2F4A1A"/><path d="M14 22 L18 8" stroke="#2F4A1A" stroke-width="2.5"/><ellipse cx="23.5" cy="15" rx="4.5" ry="6" fill="none" stroke="#2F4A1A" stroke-width="3"/></svg>
<div class="t" style="left:89px;top:166.60px;font-size:24px;color:#000;font-weight:400;transform:scaleX(0.9210);transform-origin:0 0;">I/O Port (PORTD)</div>
<svg class="a" style="left:52px;top:194px;" width="32" height="32" viewBox="0 0 32 32"><rect width="32" height="32" fill="#8DC63F"/><rect width="32" height="11" fill="#B1DA7E"/><rect x="4" y="8" width="4" height="14" fill="#2F4A1A"/><path d="M14 22 L18 8" stroke="#2F4A1A" stroke-width="2.5"/><ellipse cx="23.5" cy="15" rx="4.5" ry="6" fill="none" stroke="#2F4A1A" stroke-width="3"/></svg>
<div class="t" style="left:89px;top:200.60px;font-size:24px;color:#000;font-weight:400;transform:scaleX(0.9276);transform-origin:0 0;">I/O Port (PORTE)</div>
<svg class="a" style="left:52px;top:228px;" width="32" height="32" viewBox="0 0 32 32"><rect width="32" height="32" fill="#8DC63F"/><rect width="32" height="11" fill="#B1DA7E"/><rect x="4" y="8" width="4" height="14" fill="#2F4A1A"/><path d="M14 22 L18 8" stroke="#2F4A1A" stroke-width="2.5"/><ellipse cx="23.5" cy="15" rx="4.5" ry="6" fill="none" stroke="#2F4A1A" stroke-width="3"/></svg>
<div class="t" style="left:89px;top:234.60px;font-size:24px;color:#000;font-weight:400;transform:scaleX(0.9343);transform-origin:0 0;">I/O Port (PORTF)</div>
<svg class="a" style="left:52px;top:262px;" width="32" height="32" viewBox="0 0 32 32"><rect width="32" height="32" fill="#8DC63F"/><rect width="32" height="11" fill="#B1DA7E"/><rect x="4" y="8" width="4" height="14" fill="#2F4A1A"/><path d="M14 22 L18 8" stroke="#2F4A1A" stroke-width="2.5"/><ellipse cx="23.5" cy="15" rx="4.5" ry="6" fill="none" stroke="#2F4A1A" stroke-width="3"/></svg>
<div class="t" style="left:89px;top:268.60px;font-size:24px;color:#000;font-weight:400;transform:scaleX(0.9146);transform-origin:0 0;">I/O Port (PORTG)</div>
<svg class="a" style="left:52px;top:296px;" width="32" height="32" viewBox="0 0 32 32"><rect width="32" height="32" fill="#8DC63F"/><rect width="32" height="11" fill="#B1DA7E"/><rect x="4" y="8" width="4" height="14" fill="#2F4A1A"/><path d="M14 22 L18 8" stroke="#2F4A1A" stroke-width="2.5"/><ellipse cx="23.5" cy="15" rx="4.5" ry="6" fill="none" stroke="#2F4A1A" stroke-width="3"/></svg>
<div class="t" style="left:89px;top:302.60px;font-size:24px;color:#000;font-weight:400;transform:scaleX(0.9210);transform-origin:0 0;">I/O Port (PORTH)</div>
<svg class="a" style="left:52px;top:330px;" width="32" height="32" viewBox="0 0 32 32"><rect width="32" height="32" fill="#8DC63F"/><rect width="32" height="11" fill="#B1DA7E"/><rect x="4" y="8" width="4" height="14" fill="#2F4A1A"/><path d="M14 22 L18 8" stroke="#2F4A1A" stroke-width="2.5"/><ellipse cx="23.5" cy="15" rx="4.5" ry="6" fill="none" stroke="#2F4A1A" stroke-width="3"/></svg>
<div class="t" style="left:89px;top:336.60px;font-size:24px;color:#000;font-weight:400;transform:scaleX(0.9478);transform-origin:0 0;">I/O Port (PORTJ)</div>
<svg class="a" style="left:52px;top:364px;" width="32" height="32" viewBox="0 0 32 32"><rect width="32" height="32" fill="#8DC63F"/><rect width="32" height="11" fill="#B1DA7E"/><rect x="4" y="8" width="4" height="14" fill="#2F4A1A"/><path d="M14 22 L18 8" stroke="#2F4A1A" stroke-width="2.5"/><ellipse cx="23.5" cy="15" rx="4.5" ry="6" fill="none" stroke="#2F4A1A" stroke-width="3"/></svg>
<div class="t" style="left:89px;top:370.60px;font-size:24px;color:#000;font-weight:400;transform:scaleX(0.9276);transform-origin:0 0;">I/O Port (PORTK)</div>
<svg class="a" style="left:52px;top:398px;" width="32" height="32" viewBox="0 0 32 32"><rect width="32" height="32" fill="#8DC63F"/><rect width="32" height="11" fill="#B1DA7E"/><rect x="4" y="8" width="4" height="14" fill="#2F4A1A"/><path d="M14 22 L18 8" stroke="#2F4A1A" stroke-width="2.5"/><ellipse cx="23.5" cy="15" rx="4.5" ry="6" fill="none" stroke="#2F4A1A" stroke-width="3"/></svg>
<div class="t" style="left:89px;top:404.60px;font-size:24px;color:#000;font-weight:400;transform:scaleX(0.9409);transform-origin:0 0;">I/O Port (PORTL)</div>
<svg class="a" style="left:52px;top:432px;" width="32" height="32" viewBox="0 0 32 32"><rect width="32" height="32" fill="#D4F0F0"/><path d="M6 3 H20 L26 9 V28 H6 Z" fill="#E8F6F6" stroke="#222" stroke-width="2.5"/><path d="M10 14 H22 M10 18 H22 M10 22 H22" stroke="#333" stroke-width="2"/></svg>
<div class="t" style="left:89px;top:438.60px;font-size:24px;color:#000;font-weight:400;transform:scaleX(0.9271);transform-origin:0 0;">JTAG Interface (JTAG)</div>
<svg class="a" style="left:24px;top:473px;" width="18" height="18" viewBox="0 0 18 18"><defs><linearGradient id="eg" x1="0" y1="0" x2="0" y2="1"><stop offset="0" stop-color="#FFFFFF"/><stop offset="1" stop-color="#D8CFC0"/></linearGradient></defs><rect x="1" y="1" width="16" height="16" rx="3" fill="url(#eg)" stroke="#7894B4" stroke-width="2"/><path d="M4 9 H14 M9 4 V14" stroke="#000" stroke-width="2.2"/></svg>
<svg class="a" style="left:52px;top:466px;" width="32" height="32" viewBox="0 0 32 32"><rect width="32" height="32" fill="#0F3A6E"/><rect width="32" height="12" fill="#4F6F98"/><rect x="4" y="4" width="13" height="9" fill="none" stroke="#D8DEE8" stroke-width="2"/><rect x="4" y="18" width="13" height="9" fill="none" stroke="#D8DEE8" stroke-width="2"/><path d="M17 8 H27 V23 H17" stroke="#D8DEE8" stroke-width="2" fill="none"/></svg>
<div class="t" style="left:89px;top:472.60px;font-size:24px;color:#000;font-weight:400;transform:scaleX(0.9751);transform-origin:0 0;">Serial Peripheral Interface...</div>
<svg class="a" style="left:24px;top:507px;" width="18" height="18" viewBox="0 0 18 18"><defs><linearGradient id="eg" x1="0" y1="0" x2="0" y2="1"><stop offset="0" stop-color="#FFFFFF"/><stop offset="1" stop-color="#D8CFC0"/></linearGradient></defs><rect x="1" y="1" width="16" height="16" rx="3" fill="url(#eg)" stroke="#7894B4" stroke-width="2"/><path d="M4 9 H14 M9 4 V14" stroke="#000" stroke-width="2.2"/></svg>
<svg class="a" style="left:52px;top:500px;" width="32" height="32" viewBox="0 0 32 32"><rect width="32" height="32" fill="#D4F0F0"/><circle cx="16" cy="16" r="12" fill="#E8F6F6" stroke="#222" stroke-width="2.5"/><path d="M15 7 V16 H9" stroke="#222" stroke-width="3" fill="none"/></svg>
<div class="t" style="left:89px;top:506.60px;font-size:24px;color:#000;font-weight:400;transform:scaleX(1.0064);transform-origin:0 0;">Timer/Counter, 16-bit (TC1)</div>
<svg class="a" style="left:24px;top:541px;" width="18" height="18" viewBox="0 0 18 18"><defs><linearGradient id="eg" x1="0" y1="0" x2="0" y2="1"><stop offset="0" stop-color="#FFFFFF"/><stop offset="1" stop-color="#D8CFC0"/></linearGradient></defs><rect x="1" y="1" width="16" height="16" rx="3" fill="url(#eg)" stroke="#7894B4" stroke-width="2"/><path d="M4 9 H14 M9 4 V14" stroke="#000" stroke-width="2.2"/></svg>
<svg class="a" style="left:52px;top:534px;" width="32" height="32" viewBox="0 0 32 32"><rect width="32" height="32" fill="#D4F0F0"/><circle cx="16" cy="16" r="12" fill="#E8F6F6" stroke="#222" stroke-width="2.5"/><path d="M15 7 V16 H9" stroke="#222" stroke-width="3" fill="none"/></svg>
<div class="t" style="left:89px;top:540.60px;font-size:24px;color:#000;font-weight:400;transform:scaleX(1.0064);transform-origin:0 0;">Timer/Counter, 16-bit (TC3)</div>
<svg class="a" style="left:24px;top:575px;" width="18" height="18" viewBox="0 0 18 18"><defs><linearGradient id="eg" x1="0" y1="0" x2="0" y2="1"><stop offset="0" stop-color="#FFFFFF"/><stop offset="1" stop-color="#D8CFC0"/></linearGradient></defs><rect x="1" y="1" width="16" height="16" rx="3" fill="url(#eg)" stroke="#7894B4" stroke-width="2"/><path d="M4 9 H14 M9 4 V14" stroke="#000" stroke-width="2.2"/></svg>
<svg class="a" style="left:52px;top:568px;" width="32" height="32" viewBox="0 0 32 32"><rect width="32" height="32" fill="#D4F0F0"/><circle cx="16" cy="16" r="12" fill="#E8F6F6" stroke="#222" stroke-width="2.5"/><path d="M15 7 V16 H9" stroke="#222" stroke-width="3" fill="none"/></svg>
<div class="t" style="left:89px;top:574.60px;font-size:24px;color:#000;font-weight:400;transform:scaleX(1.0064);transform-origin:0 0;">Timer/Counter, 16-bit (TC4)</div>
<svg class="a" style="left:24px;top:609px;" width="18" height="18" viewBox="0 0 18 18"><defs><linearGradient id="eg" x1="0" y1="0" x2="0" y2="1"><stop offset="0" stop-color="#FFFFFF"/><stop offset="1" stop-color="#D8CFC0"/></linearGradient></defs><rect x="1" y="1" width="16" height="16" rx="3" fill="url(#eg)" stroke="#7894B4" stroke-width="2"/><path d="M4 9 H14 M9 4 V14" stroke="#000" stroke-width="2.2"/></svg>
<svg class="a" style="left:52px;top:602px;" width="32" height="32" viewBox="0 0 32 32"><rect width="32" height="32" fill="#D4F0F0"/><circle cx="16" cy="16" r="12" fill="#E8F6F6" stroke="#222" stroke-width="2.5"/><path d="M15 7 V16 H9" stroke="#222" stroke-width="3" fill="none"/></svg>
<div class="t" style="left:89px;top:608.60px;font-size:24px;color:#000;font-weight:400;transform:scaleX(1.0064);transform-origin:0 0;">Timer/Counter, 16-bit (TC5)</div>
<div class="a" style="left:0px;top:636px;width:1348px;height:33px;background:#0078D7;"></div>
<svg class="a" style="left:24px;top:643px;" width="18" height="18" viewBox="0 0 18 18"><defs><linearGradient id="eg" x1="0" y1="0" x2="0" y2="1"><stop offset="0" stop-color="#FFFFFF"/><stop offset="1" stop-color="#D8CFC0"/></linearGradient></defs><rect x="1" y="1" width="16" height="16" rx="3" fill="url(#eg)" stroke="#7894B4" stroke-width="2"/><path d="M4 9 H14 M9 4 V14" stroke="#000" stroke-width="2.2"/></svg>
<svg class="a" style="left:52px;top:636px;" width="32" height="32" viewBox="0 0 32 32"><rect width="32" height="32" fill="#D4F0F0"/><circle cx="16" cy="16" r="12" fill="#E8F6F6" stroke="#222" stroke-width="2.5"/><path d="M15 7 V16 H9" stroke="#222" stroke-width="3" fill="none"/></svg>
<div class="t" style="left:89px;top:642.60px;font-size:24px;color:#FFFFFF;font-weight:400;transform:scaleX(1.0061);transform-origin:0 0;">Timer/Counter, 8-bit (TC0)</div>
<svg class="a" style="left:24px;top:677px;" width="18" height="18" viewBox="0 0 18 18"><defs><linearGradient id="eg" x1="0" y1="0" x2="0" y2="1"><stop offset="0" stop-color="#FFFFFF"/><stop offset="1" stop-color="#D8CFC0"/></linearGradient></defs><rect x="1" y="1" width="16" height="16" rx="3" fill="url(#eg)" stroke="#7894B4" stroke-width="2"/><path d="M4 9 H14 M9 4 V14" stroke="#000" stroke-width="2.2"/></svg>
<svg class="a" style="left:52px;top:670px;" width="32" height="32" viewBox="0 0 32 32"><rect width="32" height="32" fill="#D4F0F0"/><circle cx="16" cy="16" r="12" fill="#E8F6F6" stroke="#222" stroke-width="2.5"/><path d="M15 7 V16 H9" stroke="#222" stroke-width="3" fill="none"/></svg>
<div class="t" style="left:89px;top:676.60px;font-size:24px;color:#000;font-weight:400;transform:scaleX(1.0193);transform-origin:0 0;">Timer/Counter, 8-bit Asyn...</div>
<svg class="a" style="left:24px;top:711px;" width="18" height="18" viewBox="0 0 18 18"><defs><linearGradient id="eg" x1="0" y1="0" x2="0" y2="1"><stop offset="0" stop-color="#FFFFFF"/><stop offset="1" stop-color="#D8CFC0"/></linearGradient></defs><rect x="1" y="1" width="16" height="16" rx="3" fill="url(#eg)" stroke="#7894B4" stroke-width="2"/><path d="M4 9 H14 M9 4 V14" stroke="#000" stroke-width="2.2"/></svg>
<svg class="a" style="left:52px;top:704px;" width="32" height="32" viewBox="0 0 32 32"><rect width="32" height="32" fill="#0F3A6E"/><rect width="32" height="12" fill="#4F6F98"/><rect x="4" y="4" width="13" height="9" fill="none" stroke="#D8DEE8" stroke-width="2"/><rect x="4" y="18" width="13" height="9" fill="none" stroke="#D8DEE8" stroke-width="2"/><path d="M17 8 H27 V23 H17" stroke="#D8DEE8" stroke-width="2" fill="none"/></svg>
<div class="t" style="left:89px;top:710.60px;font-size:24px;color:#000;font-weight:400;transform:scaleX(0.9803);transform-origin:0 0;">Two Wire Serial Interface (...</div>
<svg class="a" style="left:24px;top:745px;" width="18" height="18" viewBox="0 0 18 18"><defs><linearGradient id="eg" x1="0" y1="0" x2="0" y2="1"><stop offset="0" stop-color="#FFFFFF"/><stop offset="1" stop-color="#D8CFC0"/></linearGradient></defs><rect x="1" y="1" width="16" height="16" rx="3" fill="url(#eg)" stroke="#7894B4" stroke-width="2"/><path d="M4 9 H14 M9 4 V14" stroke="#000" stroke-width="2.2"/></svg>
<svg class="a" style="left:52px;top:738px;" width="32" height="32" viewBox="0 0 32 32"><rect width="32" height="32" fill="#D4F0F0"/><path d="M6 3 H20 L26 9 V28 H6 Z" fill="#E8F6F6" stroke="#222" stroke-width="2.5"/><path d="M10 14 H22 M10 18 H22 M10 22 H22" stroke="#333" stroke-width="2"/></svg>
<div class="t" style="left:89px;top:744.60px;font-size:24px;color:#000;font-weight:400;transform:scaleX(0.8856);transform-origin:0 0;">USART (USART0)</div>
<svg class="a" style="left:24px;top:779px;" width="18" height="18" viewBox="0 0 18 18"><defs><linearGradient id="eg" x1="0" y1="0" x2="0" y2="1"><stop offset="0" stop-color="#FFFFFF"/><stop offset="1" stop-color="#D8CFC0"/></linearGradient></defs><rect x="1" y="1" width="16" height="16" rx="3" fill="url(#eg)" stroke="#7894B4" stroke-width="2"/><path d="M4 9 H14 M9 4 V14" stroke="#000" stroke-width="2.2"/></svg>
<svg class="a" style="left:52px;top:772px;" width="32" height="32" viewBox="0 0 32 32"><rect width="32" height="32" fill="#D4F0F0"/><path d="M6 3 H20 L26 9 V28 H6 Z" fill="#E8F6F6" stroke="#222" stroke-width="2.5"/><path d="M10 14 H22 M10 18 H22 M10 22 H22" stroke="#333" stroke-width="2"/></svg>
<div class="t" style="left:89px;top:778.60px;font-size:24px;color:#000;font-weight:400;transform:scaleX(0.8856);transform-origin:0 0;">USART (USART1)</div>
<svg class="a" style="left:24px;top:813px;" width="18" height="18" viewBox="0 0 18 18"><defs><linearGradient id="eg" x1="0" y1="0" x2="0" y2="1"><stop offset="0" stop-color="#FFFFFF"/><stop offset="1" stop-color="#D8CFC0"/></linearGradient></defs><rect x="1" y="1" width="16" height="16" rx="3" fill="url(#eg)" stroke="#7894B4" stroke-width="2"/><path d="M4 9 H14 M9 4 V14" stroke="#000" stroke-width="2.2"/></svg>
<svg class="a" style="left:52px;top:806px;" width="32" height="32" viewBox="0 0 32 32"><rect width="32" height="32" fill="#D4F0F0"/><path d="M6 3 H20 L26 9 V28 H6 Z" fill="#E8F6F6" stroke="#222" stroke-width="2.5"/><path d="M10 14 H22 M10 18 H22 M10 22 H22" stroke="#333" stroke-width="2"/></svg>
<div class="t" style="left:89px;top:812.60px;font-size:24px;color:#000;font-weight:400;transform:scaleX(0.8856);transform-origin:0 0;">USART (USART2)</div>
</div>
<div class="a" style="left:1740px;top:1192px;width:1384px;height:2px;background:#808890;"></div>
<div class="a" style="left:1738px;top:1194px;width:1386px;height:10px;background:#E8E8EC;"></div>
<div class="a" style="left:1738px;top:1204px;width:1386px;height:2px;background:#808890;"></div>
<div class="a" style="left:1738px;top:1206px;width:2px;height:870px;background:#82868F;"></div>
<div class="a" style="left:1740px;top:1206px;width:1384px;height:870px;background:#FFFFFF;"></div>
<div class="a" style="left:1740px;top:1206px;width:1384px;height:40px;background:#F0F0F0;"></div>
<div class="a" style="left:2008px;top:1208px;width:2px;height:38px;background:#DCDCDC;"></div>
<div class="a" style="left:2100px;top:1208px;width:2px;height:38px;background:#DCDCDC;"></div>
<div class="a" style="left:2182px;top:1208px;width:2px;height:38px;background:#DCDCDC;"></div>
<div class="a" style="left:2447px;top:1208px;width:2px;height:38px;background:#DCDCDC;"></div>
<div class="t" style="left:1574px;width:600px;text-align:center;top:1212.60px;font-size:24px;color:#000;font-weight:400;">Name</div>
<div class="t" style="left:2014px;top:1212.60px;font-size:24px;color:#000;font-weight:400;transform:scaleX(0.9665);transform-origin:0 0;">Address</div>
<div class="t" style="left:2113px;top:1212.60px;font-size:24px;color:#000;font-weight:400;">Value</div>
<div class="t" style="left:2015px;width:600px;text-align:center;top:1212.60px;font-size:24px;color:#000;font-weight:400;">Bits</div>
<div class="a" style="left:3088px;top:1246px;width:36px;height:830px;background:#E8E8EC;"></div>
<svg class="a" style="left:3097px;top:1256px;" width="18" height="10" viewBox="0 0 18 10"><path d="M0 9 H17 L8.5 0 Z" fill="#D4D5DB"/></svg>
<svg class="a" style="left:3097px;top:2056px;" width="18" height="10" viewBox="0 0 18 10"><path d="M0 0 H17 L8.5 9 Z" fill="#D4D5DB"/></svg>
<div class="a" style="left:1740px;top:2074px;width:1384px;height:2px;background:#82868F;"></div>
<svg class="a" style="left:1764px;top:1253px;" width="18" height="18" viewBox="0 0 18 18"><defs><linearGradient id="eg" x1="0" y1="0" x2="0" y2="1"><stop offset="0" stop-color="#FFFFFF"/><stop offset="1" stop-color="#D8CFC0"/></linearGradient></defs><rect x="1" y="1" width="16" height="16" rx="3" fill="url(#eg)" stroke="#7894B4" stroke-width="2"/><path d="M4 9 H14 M9 4 V14" stroke="#000" stroke-width="2.2"/></svg>
<svg class="a" style="left:1792px;top:1246px;" width="32" height="32" viewBox="0 0 32 32"><rect width="32" height="32" fill="#D4F0F0"/><circle cx="16" cy="16" r="12" fill="#E8F6F6" stroke="#222" stroke-width="2.5"/><path d="M15 7 V16 H9" stroke="#222" stroke-width="3" fill="none"/></svg>
<div class="t" style="left:1829px;top:1251.90px;font-size:24px;color:#000;font-weight:400;transform:scaleX(0.8924);transform-origin:0 0;">TIFR0</div>
<div class="t" style="left:2024px;top:1251.90px;font-size:24px;color:#000;font-weight:400;">0x35</div>
<div class="t" style="left:2120px;top:1251.90px;font-size:24px;color:#000;font-weight:400;">0x04</div>
<svg class="a" style="left:2202px;top:1253px;" width="19" height="19" viewBox="0 0 19 19"><rect x="0" y="0" width="18" height="18" rx="4" fill="#CDD3DE"/></svg>
<svg class="a" style="left:2232px;top:1253px;" width="19" height="19" viewBox="0 0 19 19"><rect x="0" y="0" width="18" height="18" rx="4" fill="#CDD3DE"/></svg>
<svg class="a" style="left:2262px;top:1253px;" width="19" height="19" viewBox="0 0 19 19"><rect x="0" y="0" width="18" height="18" rx="4" fill="#CDD3DE"/></svg>
<svg class="a" style="left:2292px;top:1253px;" width="19" height="19" viewBox="0 0 19 19"><rect x="0" y="0" width="18" height="18" rx="4" fill="#CDD3DE"/></svg>
<svg class="a" style="left:2322px;top:1253px;" width="19" height="19" viewBox="0 0 19 19"><rect x="0" y="0" width="18" height="18" rx="4" fill="#CDD3DE"/></svg>
<svg class="a" style="left:2350px;top:1250px;" width="24" height="24" viewBox="0 0 24 24"><rect x="1" y="1" width="22" height="22" rx="4.5" fill="#3F5579" stroke="#1B2A47" stroke-width="2"/></svg>
<svg class="a" style="left:2380px;top:1250px;" width="24" height="24" viewBox="0 0 24 24"><rect x="1" y="1" width="22" height="22" rx="4.5" fill="#E8EBF0" stroke="#1B2A47" stroke-width="2"/></svg>
<svg class="a" style="left:2410px;top:1250px;" width="24" height="24" viewBox="0 0 24 24"><rect x="1" y="1" width="22" height="22" rx="4.5" fill="#E8EBF0" stroke="#1B2A47" stroke-width="2"/></svg>
<svg class="a" style="left:1764px;top:1287px;" width="18" height="18" viewBox="0 0 18 18"><defs><linearGradient id="eg" x1="0" y1="0" x2="0" y2="1"><stop offset="0" stop-color="#FFFFFF"/><stop offset="1" stop-color="#D8CFC0"/></linearGradient></defs><rect x="1" y="1" width="16" height="16" rx="3" fill="url(#eg)" stroke="#7894B4" stroke-width="2"/><path d="M4 9 H14 M9 4 V14" stroke="#000" stroke-width="2.2"/></svg>
<svg class="a" style="left:1792px;top:1280px;" width="32" height="32" viewBox="0 0 32 32"><rect width="32" height="32" fill="#8DC63F"/><rect width="32" height="11" fill="#B1DA7E"/><rect x="4" y="8" width="4" height="14" fill="#2F4A1A"/><path d="M14 22 L18 8" stroke="#2F4A1A" stroke-width="2.5"/><ellipse cx="23.5" cy="15" rx="4.5" ry="6" fill="none" stroke="#2F4A1A" stroke-width="3"/></svg>
<div class="t" style="left:1829px;top:1285.93px;font-size:24px;color:#000;font-weight:400;transform:scaleX(0.8333);transform-origin:0 0;">GTCCR</div>
<div class="t" style="left:2024px;top:1285.93px;font-size:24px;color:#000;font-weight:400;">0x43</div>
<div class="t" style="left:2120px;top:1285.93px;font-size:24px;color:#000;font-weight:400;">0x00</div>
<svg class="a" style="left:2200px;top:1284px;" width="24" height="24" viewBox="0 0 24 24"><rect x="1" y="1" width="22" height="22" rx="4.5" fill="#E8EBF0" stroke="#1B2A47" stroke-width="2"/></svg>
<svg class="a" style="left:2232px;top:1287px;" width="19" height="19" viewBox="0 0 19 19"><rect x="0" y="0" width="18" height="18" rx="4" fill="#CDD3DE"/></svg>
<svg class="a" style="left:2262px;top:1287px;" width="19" height="19" viewBox="0 0 19 19"><rect x="0" y="0" width="18" height="18" rx="4" fill="#CDD3DE"/></svg>
<svg class="a" style="left:2292px;top:1287px;" width="19" height="19" viewBox="0 0 19 19"><rect x="0" y="0" width="18" height="18" rx="4" fill="#CDD3DE"/></svg>
<svg class="a" style="left:2322px;top:1287px;" width="19" height="19" viewBox="0 0 19 19"><rect x="0" y="0" width="18" height="18" rx="4" fill="#CDD3DE"/></svg>
<svg class="a" style="left:2352px;top:1287px;" width="19" height="19" viewBox="0 0 19 19"><rect x="0" y="0" width="18" height="18" rx="4" fill="#CDD3DE"/></svg>
<svg class="a" style="left:2382px;top:1287px;" width="19" height="19" viewBox="0 0 19 19"><rect x="0" y="0" width="18" height="18" rx="4" fill="#CDD3DE"/></svg>
<svg class="a" style="left:2410px;top:1284px;" width="24" height="24" viewBox="0 0 24 24"><rect x="1" y="1" width="22" height="22" rx="4.5" fill="#E8EBF0" stroke="#1B2A47" stroke-width="2"/></svg>
<svg class="a" style="left:1764px;top:1321px;" width="18" height="18" viewBox="0 0 18 18"><defs><linearGradient id="eg" x1="0" y1="0" x2="0" y2="1"><stop offset="0" stop-color="#FFFFFF"/><stop offset="1" stop-color="#D8CFC0"/></linearGradient></defs><rect x="1" y="1" width="16" height="16" rx="3" fill="url(#eg)" stroke="#7894B4" stroke-width="2"/><path d="M4 9 H14 M9 4 V14" stroke="#000" stroke-width="2.2"/></svg>
<svg class="a" style="left:1792px;top:1314px;" width="32" height="32" viewBox="0 0 32 32"><rect width="32" height="32" fill="#D4F0F0"/><circle cx="16" cy="16" r="12" fill="#E8F6F6" stroke="#222" stroke-width="2.5"/><path d="M15 7 V16 H9" stroke="#222" stroke-width="3" fill="none"/></svg>
<div class="t" style="left:1829px;top:1319.96px;font-size:24px;color:#000;font-weight:400;transform:scaleX(0.8738);transform-origin:0 0;">TCCR0A</div>
<div class="t" style="left:2024px;top:1319.96px;font-size:24px;color:#000;font-weight:400;">0x44</div>
<div class="t" style="left:2120px;top:1319.96px;font-size:24px;color:#000;font-weight:400;">0x02</div>
<svg class="a" style="left:2200px;top:1318px;" width="24" height="24" viewBox="0 0 24 24"><rect x="1" y="1" width="22" height="22" rx="4.5" fill="#E8EBF0" stroke="#1B2A47" stroke-width="2"/></svg>
<svg class="a" style="left:2230px;top:1318px;" width="24" height="24" viewBox="0 0 24 24"><rect x="1" y="1" width="22" height="22" rx="4.5" fill="#E8EBF0" stroke="#1B2A47" stroke-width="2"/></svg>
<svg class="a" style="left:2260px;top:1318px;" width="24" height="24" viewBox="0 0 24 24"><rect x="1" y="1" width="22" height="22" rx="4.5" fill="#E8EBF0" stroke="#1B2A47" stroke-width="2"/></svg>
<svg class="a" style="left:2290px;top:1318px;" width="24" height="24" viewBox="0 0 24 24"><rect x="1" y="1" width="22" height="22" rx="4.5" fill="#E8EBF0" stroke="#1B2A47" stroke-width="2"/></svg>
<svg class="a" style="left:2322px;top:1321px;" width="19" height="19" viewBox="0 0 19 19"><rect x="0" y="0" width="18" height="18" rx="4" fill="#CDD3DE"/></svg>
<svg class="a" style="left:2352px;top:1321px;" width="19" height="19" viewBox="0 0 19 19"><rect x="0" y="0" width="18" height="18" rx="4" fill="#CDD3DE"/></svg>
<svg class="a" style="left:2380px;top:1318px;" width="24" height="24" viewBox="0 0 24 24"><rect x="1" y="1" width="22" height="22" rx="4.5" fill="#3F5579" stroke="#1B2A47" stroke-width="2"/></svg>
<svg class="a" style="left:2410px;top:1318px;" width="24" height="24" viewBox="0 0 24 24"><rect x="1" y="1" width="22" height="22" rx="4.5" fill="#E8EBF0" stroke="#1B2A47" stroke-width="2"/></svg>
<svg class="a" style="left:1764px;top:1355px;" width="18" height="18" viewBox="0 0 18 18"><defs><linearGradient id="eg" x1="0" y1="0" x2="0" y2="1"><stop offset="0" stop-color="#FFFFFF"/><stop offset="1" stop-color="#D8CFC0"/></linearGradient></defs><rect x="1" y="1" width="16" height="16" rx="3" fill="url(#eg)" stroke="#7894B4" stroke-width="2"/><path d="M4 9 H14 M9 4 V14" stroke="#000" stroke-width="2.2"/></svg>
<svg class="a" style="left:1792px;top:1348px;" width="32" height="32" viewBox="0 0 32 32"><rect width="32" height="32" fill="#D4F0F0"/><circle cx="16" cy="16" r="12" fill="#E8F6F6" stroke="#222" stroke-width="2.5"/><path d="M15 7 V16 H9" stroke="#222" stroke-width="3" fill="none"/></svg>
<div class="t" style="left:1829px;top:1353.99px;font-size:24px;color:#000;font-weight:400;transform:scaleX(0.8613);transform-origin:0 0;">TCCR0B</div>
<div class="t" style="left:2024px;top:1353.99px;font-size:24px;color:#000;font-weight:400;">0x45</div>
<div class="t" style="left:2120px;top:1353.99px;font-size:24px;color:#000;font-weight:400;">0x05</div>
<svg class="a" style="left:2200px;top:1352px;" width="24" height="24" viewBox="0 0 24 24"><rect x="1" y="1" width="22" height="22" rx="4.5" fill="#E8EBF0" stroke="#1B2A47" stroke-width="2"/></svg>
<svg class="a" style="left:2230px;top:1352px;" width="24" height="24" viewBox="0 0 24 24"><rect x="1" y="1" width="22" height="22" rx="4.5" fill="#E8EBF0" stroke="#1B2A47" stroke-width="2"/></svg>
<svg class="a" style="left:2262px;top:1355px;" width="19" height="19" viewBox="0 0 19 19"><rect x="0" y="0" width="18" height="18" rx="4" fill="#CDD3DE"/></svg>
<svg class="a" style="left:2292px;top:1355px;" width="19" height="19" viewBox="0 0 19 19"><rect x="0" y="0" width="18" height="18" rx="4" fill="#CDD3DE"/></svg>
<svg class="a" style="left:2320px;top:1352px;" width="24" height="24" viewBox="0 0 24 24"><rect x="1" y="1" width="22" height="22" rx="4.5" fill="#E8EBF0" stroke="#1B2A47" stroke-width="2"/></svg>
<svg class="a" style="left:2350px;top:1352px;" width="24" height="24" viewBox="0 0 24 24"><rect x="1" y="1" width="22" height="22" rx="4.5" fill="#3F5579" stroke="#1B2A47" stroke-width="2"/></svg>
<svg class="a" style="left:2380px;top:1352px;" width="24" height="24" viewBox="0 0 24 24"><rect x="1" y="1" width="22" height="22" rx="4.5" fill="#E8EBF0" stroke="#1B2A47" stroke-width="2"/></svg>
<svg class="a" style="left:2410px;top:1352px;" width="24" height="24" viewBox="0 0 24 24"><rect x="1" y="1" width="22" height="22" rx="4.5" fill="#3F5579" stroke="#1B2A47" stroke-width="2"/></svg>
<svg class="a" style="left:1792px;top:1382px;" width="32" height="32" viewBox="0 0 32 32"><rect width="32" height="32" fill="#D4F0F0"/><circle cx="16" cy="16" r="12" fill="#E8F6F6" stroke="#222" stroke-width="2.5"/><path d="M15 7 V16 H9" stroke="#222" stroke-width="3" fill="none"/></svg>
<div class="t" style="left:1829px;top:1388.02px;font-size:24px;color:#000;font-weight:400;transform:scaleX(0.9271);transform-origin:0 0;">TCNT0</div>
<div class="t" style="left:2024px;top:1388.02px;font-size:24px;color:#000;font-weight:400;">0x46</div>
<div class="t" style="left:2120px;top:1388.02px;font-size:24px;color:#000;font-weight:400;">0x01</div>
<svg class="a" style="left:2200px;top:1386px;" width="24" height="24" viewBox="0 0 24 24"><rect x="1" y="1" width="22" height="22" rx="4.5" fill="#E8EBF0" stroke="#1B2A47" stroke-width="2"/></svg>
<svg class="a" style="left:2230px;top:1386px;" width="24" height="24" viewBox="0 0 24 24"><rect x="1" y="1" width="22" height="22" rx="4.5" fill="#E8EBF0" stroke="#1B2A47" stroke-width="2"/></svg>
<svg class="a" style="left:2260px;top:1386px;" width="24" height="24" viewBox="0 0 24 24"><rect x="1" y="1" width="22" height="22" rx="4.5" fill="#E8EBF0" stroke="#1B2A47" stroke-width="2"/></svg>
<svg class="a" style="left:2290px;top:1386px;" width="24" height="24" viewBox="0 0 24 24"><rect x="1" y="1" width="22" height="22" rx="4.5" fill="#E8EBF0" stroke="#1B2A47" stroke-width="2"/></svg>
<svg class="a" style="left:2320px;top:1386px;" width="24" height="24" viewBox="0 0 24 24"><rect x="1" y="1" width="22" height="22" rx="4.5" fill="#E8EBF0" stroke="#1B2A47" stroke-width="2"/></svg>
<svg class="a" style="left:2350px;top:1386px;" width="24" height="24" viewBox="0 0 24 24"><rect x="1" y="1" width="22" height="22" rx="4.5" fill="#E8EBF0" stroke="#1B2A47" stroke-width="2"/></svg>
<svg class="a" style="left:2380px;top:1386px;" width="24" height="24" viewBox="0 0 24 24"><rect x="1" y="1" width="22" height="22" rx="4.5" fill="#E8EBF0" stroke="#1B2A47" stroke-width="2"/></svg>
<svg class="a" style="left:2410px;top:1386px;" width="24" height="24" viewBox="0 0 24 24"><rect x="1" y="1" width="22" height="22" rx="4.5" fill="#3F5579" stroke="#1B2A47" stroke-width="2"/></svg>
<svg class="a" style="left:1792px;top:1416px;" width="32" height="32" viewBox="0 0 32 32"><rect width="32" height="32" fill="#D4F0F0"/><circle cx="16" cy="16" r="12" fill="#E8F6F6" stroke="#222" stroke-width="2.5"/><path d="M15 7 V16 H9" stroke="#222" stroke-width="3" fill="none"/></svg>
<div class="t" style="left:1829px;top:1422.05px;font-size:24px;color:#000;font-weight:400;transform:scaleX(0.9251);transform-origin:0 0;">OCR0A</div>
<div class="t" style="left:2024px;top:1422.05px;font-size:24px;color:#000;font-weight:400;">0x47</div>
<div class="t" style="left:2120px;top:1422.05px;font-size:24px;color:#000;font-weight:400;">0x06</div>
<svg class="a" style="left:2200px;top:1420px;" width="24" height="24" viewBox="0 0 24 24"><rect x="1" y="1" width="22" height="22" rx="4.5" fill="#E8EBF0" stroke="#1B2A47" stroke-width="2"/></svg>
<svg class="a" style="left:2230px;top:1420px;" width="24" height="24" viewBox="0 0 24 24"><rect x="1" y="1" width="22" height="22" rx="4.5" fill="#E8EBF0" stroke="#1B2A47" stroke-width="2"/></svg>
<svg class="a" style="left:2260px;top:1420px;" width="24" height="24" viewBox="0 0 24 24"><rect x="1" y="1" width="22" height="22" rx="4.5" fill="#E8EBF0" stroke="#1B2A47" stroke-width="2"/></svg>
<svg class="a" style="left:2290px;top:1420px;" width="24" height="24" viewBox="0 0 24 24"><rect x="1" y="1" width="22" height="22" rx="4.5" fill="#E8EBF0" stroke="#1B2A47" stroke-width="2"/></svg>
<svg class="a" style="left:2320px;top:1420px;" width="24" height="24" viewBox="0 0 24 24"><rect x="1" y="1" width="22" height="22" rx="4.5" fill="#E8EBF0" stroke="#1B2A47" stroke-width="2"/></svg>
<svg class="a" style="left:2350px;top:1420px;" width="24" height="24" viewBox="0 0 24 24"><rect x="1" y="1" width="22" height="22" rx="4.5" fill="#3F5579" stroke="#1B2A47" stroke-width="2"/></svg>
<svg class="a" style="left:2380px;top:1420px;" width="24" height="24" viewBox="0 0 24 24"><rect x="1" y="1" width="22" height="22" rx="4.5" fill="#3F5579" stroke="#1B2A47" stroke-width="2"/></svg>
<svg class="a" style="left:2410px;top:1420px;" width="24" height="24" viewBox="0 0 24 24"><rect x="1" y="1" width="22" height="22" rx="4.5" fill="#E8EBF0" stroke="#1B2A47" stroke-width="2"/></svg>
<svg class="a" style="left:1792px;top:1450px;" width="32" height="32" viewBox="0 0 32 32"><rect width="32" height="32" fill="#D4F0F0"/><circle cx="16" cy="16" r="12" fill="#E8F6F6" stroke="#222" stroke-width="2.5"/><path d="M15 7 V16 H9" stroke="#222" stroke-width="3" fill="none"/></svg>
<div class="t" style="left:1829px;top:1456.08px;font-size:24px;color:#000;font-weight:400;transform:scaleX(0.9034);transform-origin:0 0;">OCR0B</div>
<div class="t" style="left:2024px;top:1456.08px;font-size:24px;color:#000;font-weight:400;">0x48</div>
<div class="t" style="left:2120px;top:1456.08px;font-size:24px;color:#000;font-weight:400;">0x00</div>
<svg class="a" style="left:2200px;top:1454px;" width="24" height="24" viewBox="0 0 24 24"><rect x="1" y="1" width="22" height="22" rx="4.5" fill="#E8EBF0" stroke="#1B2A47" stroke-width="2"/></svg>
<svg class="a" style="left:2230px;top:1454px;" width="24" height="24" viewBox="0 0 24 24"><rect x="1" y="1" width="22" height="22" rx="4.5" fill="#E8EBF0" stroke="#1B2A47" stroke-width="2"/></svg>
<svg class="a" style="left:2260px;top:1454px;" width="24" height="24" viewBox="0 0 24 24"><rect x="1" y="1" width="22" height="22" rx="4.5" fill="#E8EBF0" stroke="#1B2A47" stroke-width="2"/></svg>
<svg class="a" style="left:2290px;top:1454px;" width="24" height="24" viewBox="0 0 24 24"><rect x="1" y="1" width="22" height="22" rx="4.5" fill="#E8EBF0" stroke="#1B2A47" stroke-width="2"/></svg>
<svg class="a" style="left:2320px;top:1454px;" width="24" height="24" viewBox="0 0 24 24"><rect x="1" y="1" width="22" height="22" rx="4.5" fill="#E8EBF0" stroke="#1B2A47" stroke-width="2"/></svg>
<svg class="a" style="left:2350px;top:1454px;" width="24" height="24" viewBox="0 0 24 24"><rect x="1" y="1" width="22" height="22" rx="4.5" fill="#E8EBF0" stroke="#1B2A47" stroke-width="2"/></svg>
<svg class="a" style="left:2380px;top:1454px;" width="24" height="24" viewBox="0 0 24 24"><rect x="1" y="1" width="22" height="22" rx="4.5" fill="#E8EBF0" stroke="#1B2A47" stroke-width="2"/></svg>
<svg class="a" style="left:2410px;top:1454px;" width="24" height="24" viewBox="0 0 24 24"><rect x="1" y="1" width="22" height="22" rx="4.5" fill="#E8EBF0" stroke="#1B2A47" stroke-width="2"/></svg>
<svg class="a" style="left:1764px;top:1492px;" width="18" height="18" viewBox="0 0 18 18"><defs><linearGradient id="eg" x1="0" y1="0" x2="0" y2="1"><stop offset="0" stop-color="#FFFFFF"/><stop offset="1" stop-color="#D8CFC0"/></linearGradient></defs><rect x="1" y="1" width="16" height="16" rx="3" fill="url(#eg)" stroke="#7894B4" stroke-width="2"/><path d="M4 9 H14 M9 4 V14" stroke="#000" stroke-width="2.2"/></svg>
<svg class="a" style="left:1792px;top:1484px;" width="32" height="32" viewBox="0 0 32 32"><rect width="32" height="32" fill="#D4F0F0"/><circle cx="16" cy="16" r="12" fill="#E8F6F6" stroke="#222" stroke-width="2.5"/><path d="M15 7 V16 H9" stroke="#222" stroke-width="3" fill="none"/></svg>
<div class="t" style="left:1829px;top:1490.11px;font-size:24px;color:#000;font-weight:400;transform:scaleX(0.9459);transform-origin:0 0;">TIMSK0</div>
<div class="t" style="left:2024px;top:1490.11px;font-size:24px;color:#000;font-weight:400;">0x6E</div>
<div class="t" style="left:2120px;top:1490.11px;font-size:24px;color:#000;font-weight:400;">0x02</div>
<svg class="a" style="left:2202px;top:1491px;" width="19" height="19" viewBox="0 0 19 19"><rect x="0" y="0" width="18" height="18" rx="4" fill="#CDD3DE"/></svg>
<svg class="a" style="left:2232px;top:1491px;" width="19" height="19" viewBox="0 0 19 19"><rect x="0" y="0" width="18" height="18" rx="4" fill="#CDD3DE"/></svg>
<svg class="a" style="left:2262px;top:1491px;" width="19" height="19" viewBox="0 0 19 19"><rect x="0" y="0" width="18" height="18" rx="4" fill="#CDD3DE"/></svg>
<svg class="a" style="left:2292px;top:1491px;" width="19" height="19" viewBox="0 0 19 19"><rect x="0" y="0" width="18" height="18" rx="4" fill="#CDD3DE"/></svg>
<svg class="a" style="left:2322px;top:1491px;" width="19" height="19" viewBox="0 0 19 19"><rect x="0" y="0" width="18" height="18" rx="4" fill="#CDD3DE"/></svg>
<svg class="a" style="left:2350px;top:1488px;" width="24" height="24" viewBox="0 0 24 24"><rect x="1" y="1" width="22" height="22" rx="4.5" fill="#E8EBF0" stroke="#1B2A47" stroke-width="2"/></svg>
<svg class="a" style="left:2380px;top:1488px;" width="24" height="24" viewBox="0 0 24 24"><rect x="1" y="1" width="22" height="22" rx="4.5" fill="#3F5579" stroke="#1B2A47" stroke-width="2"/></svg>
<svg class="a" style="left:2410px;top:1488px;" width="24" height="24" viewBox="0 0 24 24"><rect x="1" y="1" width="22" height="22" rx="4.5" fill="#E8EBF0" stroke="#1B2A47" stroke-width="2"/></svg>
<div class="a" style="left:3138px;top:224px;width:1096px;height:1856px;background:#8E9BBC;"></div>
<div class="a" style="left:3140px;top:226px;width:1092px;height:44px;background:#4D6082;"></div>
<div class="t" style="left:3149px;top:237.60px;font-size:24px;color:#FFFFFF;font-weight:400;transform:scaleX(0.9417);transform-origin:0 0;">Processor Status</div>
<svg class="a" style="left:4132px;top:243px;" width="17" height="10" viewBox="0 0 17 10"><path d="M0 0 H16 L8 8 Z" fill="#D0D5DF"/></svg>
<svg class="a" style="left:4167px;top:236px;" width="16" height="24" viewBox="0 0 16 24"><rect x="3" y="1" width="9" height="12" fill="none" stroke="#D0D5DF" stroke-width="2.2"/><rect x="8" y="1" width="4" height="12" fill="#D0D5DF"/><path d="M0 14 H15" stroke="#D0D5DF" stroke-width="2"/><path d="M7.5 14 V23" stroke="#D0D5DF" stroke-width="2"/></svg>
<svg class="a" style="left:4198px;top:239px;" width="21" height="18" viewBox="0 0 21 18"><path d="M1.5 1 L19.5 17 M19.5 1 L1.5 17" stroke="#D0D5DF" stroke-width="2.6"/></svg>
<div class="a" style="left:3140px;top:270px;width:1092px;height:1768px;background:#FFFFFF;"></div>
<div class="a" style="left:3140px;top:270px;width:1092px;height:40px;background:#F0F0F0;"></div>
<div class="a" style="left:3349px;top:272px;width:2px;height:38px;background:#DCDCDC;"></div>
<div class="a" style="left:3614px;top:272px;width:2px;height:38px;background:#DCDCDC;"></div>
<div class="t" style="left:2946px;width:600px;text-align:center;top:278.60px;font-size:24px;color:#000;font-weight:400;">Name</div>
<div class="t" style="left:3183px;width:600px;text-align:center;top:278.60px;font-size:24px;color:#000;font-weight:400;">Value</div>
<div class="a" style="left:4198px;top:310px;width:34px;height:1728px;background:#E8E8EC;"></div>
<svg class="a" style="left:4206px;top:322px;" width="18" height="10" viewBox="0 0 18 10"><path d="M0 9 H17 L8.5 0 Z" fill="#868999"/></svg>
<svg class="a" style="left:4206px;top:2011px;" width="18" height="10" viewBox="0 0 18 10"><path d="M0 0 H17 L8.5 9 Z" fill="#868999"/></svg>
<div class="a" style="left:4205px;top:344px;width:20px;height:1535px;background:#C8C8D0;"></div>
<div class="t" style="left:3164px;top:322.10px;font-size:24px;color:#000;font-weight:400;transform:scaleX(0.9974);transform-origin:0 0;">Program Counter</div>
<div class="t" style="left:3377px;top:322.10px;font-size:24px;color:#000;font-weight:400;transform:scaleX(0.9681);transform-origin:0 0;">0x00001A81</div>
<div class="t" style="left:3164px;top:366.10px;font-size:24px;color:#000;font-weight:400;transform:scaleX(0.9682);transform-origin:0 0;">Stack Pointer</div>
<div class="t" style="left:3377px;top:366.10px;font-size:24px;color:#000;font-weight:400;transform:scaleX(0.9817);transform-origin:0 0;">0x0404</div>
<div class="t" style="left:3164px;top:410.10px;font-size:24px;color:#000;font-weight:400;transform:scaleX(0.9576);transform-origin:0 0;">X Register</div>
<div class="t" style="left:3377px;top:410.10px;font-size:24px;color:#000;font-weight:400;transform:scaleX(0.9817);transform-origin:0 0;">0x2726</div>
<div class="t" style="left:3164px;top:454.10px;font-size:24px;color:#000;font-weight:400;transform:scaleX(0.9524);transform-origin:0 0;">Y Register</div>
<div class="t" style="left:3377px;top:454.10px;font-size:24px;color:#000;font-weight:400;transform:scaleX(0.9817);transform-origin:0 0;">0x0404</div>
<div class="t" style="left:3164px;top:498.10px;font-size:24px;color:#000;font-weight:400;transform:scaleX(0.9693);transform-origin:0 0;">Z Register</div>
<div class="t" style="left:3377px;top:498.10px;font-size:24px;color:#000;font-weight:400;transform:scaleX(0.9817);transform-origin:0 0;">0x0854</div>
<div class="t" style="left:3164px;top:542.10px;font-size:24px;color:#000;font-weight:400;transform:scaleX(0.9599);transform-origin:0 0;">Status Register</div>
<div class="t" style="left:3164px;top:586.10px;font-size:24px;color:#000;font-weight:400;transform:scaleX(0.9943);transform-origin:0 0;">Cycle Counter</div>
<div class="t" style="left:3377px;top:586.10px;font-size:24px;color:#E51400;font-weight:400;transform:scaleX(0.9825);transform-origin:0 0;">1470795</div>
<div class="t" style="left:3164px;top:630.10px;font-size:24px;color:#000;font-weight:400;transform:scaleX(0.9886);transform-origin:0 0;">Frequency</div>
<div class="t" style="left:3377px;top:630.10px;font-size:24px;color:#000;font-weight:400;transform:scaleX(0.9909);transform-origin:0 0;">8.000 MHz</div>
<div class="t" style="left:3164px;top:674.10px;font-size:24px;color:#000;font-weight:400;transform:scaleX(0.9889);transform-origin:0 0;">Stop Watch</div>
<div class="t" style="left:3377px;top:674.10px;font-size:24px;color:#000;font-weight:400;transform:scaleX(0.9592);transform-origin:0 0;">183,849.38 μs</div>
<svg class="a" style="left:3376px;top:540px;" width="25" height="25" viewBox="0 0 25 25"><rect x="1" y="1" width="23" height="23" rx="4" fill="#3F5579" stroke="#1B2A47" stroke-width="2"/><text x="12.5" y="20" text-anchor="middle" font-family="Liberation Sans" font-size="22" fill="#FFFFFF">I</text></svg>
<svg class="a" style="left:3406px;top:540px;" width="25" height="25" viewBox="0 0 25 25"><rect x="1" y="1" width="23" height="23" rx="4" fill="#E8EBF0" stroke="#1B2A47" stroke-width="2"/><text x="12.5" y="20" text-anchor="middle" font-family="Liberation Sans" font-size="22" fill="#1B2A47">T</text></svg>
<svg class="a" style="left:3436px;top:540px;" width="25" height="25" viewBox="0 0 25 25"><rect x="1" y="1" width="23" height="23" rx="4" fill="#E8EBF0" stroke="#1B2A47" stroke-width="2"/><text x="12.5" y="20" text-anchor="middle" font-family="Liberation Sans" font-size="22" fill="#1B2A47">H</text></svg>
<svg class="a" style="left:3466px;top:540px;" width="25" height="25" viewBox="0 0 25 25"><rect x="1" y="1" width="23" height="23" rx="4" fill="#E8EBF0" stroke="#1B2A47" stroke-width="2"/><text x="12.5" y="20" text-anchor="middle" font-family="Liberation Sans" font-size="22" fill="#1B2A47">S</text></svg>
<svg class="a" style="left:3496px;top:540px;" width="25" height="25" viewBox="0 0 25 25"><rect x="1" y="1" width="23" height="23" rx="4" fill="#E8EBF0" stroke="#1B2A47" stroke-width="2"/><text x="12.5" y="20" text-anchor="middle" font-family="Liberation Sans" font-size="22" fill="#1B2A47">V</text></svg>
<svg class="a" style="left:3526px;top:540px;" width="25" height="25" viewBox="0 0 25 25"><rect x="1" y="1" width="23" height="23" rx="4" fill="#E8EBF0" stroke="#1B2A47" stroke-width="2"/><text x="12.5" y="20" text-anchor="middle" font-family="Liberation Sans" font-size="22" fill="#1B2A47">N</text></svg>
<svg class="a" style="left:3556px;top:540px;" width="25" height="25" viewBox="0 0 25 25"><rect x="1" y="1" width="23" height="23" rx="4" fill="#3F5579" stroke="#1B2A47" stroke-width="2"/><text x="12.5" y="20" text-anchor="middle" font-family="Liberation Sans" font-size="22" fill="#FFFFFF">Z</text></svg>
<svg class="a" style="left:3586px;top:540px;" width="25" height="25" viewBox="0 0 25 25"><rect x="1" y="1" width="23" height="23" rx="4" fill="#E8EBF0" stroke="#1B2A47" stroke-width="2"/><text x="12.5" y="20" text-anchor="middle" font-family="Liberation Sans" font-size="22" fill="#1B2A47">C</text></svg>
<div class="a" style="left:3140px;top:706px;width:1058px;height:47px;background:#FFFFE1;"></div>
<svg class="a" style="left:3150px;top:720px;" width="20" height="20" viewBox="0 0 20 20"><rect x="1" y="1" width="18" height="18" rx="2" fill="#F4F4F4" stroke="#7D8AA5" stroke-width="2"/><path d="M5 10 H15" stroke="#000" stroke-width="2.2"/></svg>
<div class="t" style="left:3188px;top:717.60px;font-size:24px;color:#000;font-weight:400;transform:scaleX(0.9440);transform-origin:0 0;">Registers</div>
<div class="t" style="left:3173px;top:773.40px;font-size:24px;color:#000;font-weight:400;transform:scaleX(0.9221);transform-origin:0 0;">R00</div>
<div class="t" style="left:3385px;top:773.40px;font-size:24px;color:#000;font-weight:400;transform:scaleX(0.9569);transform-origin:0 0;">0x01</div>
<div class="t" style="left:3173px;top:817.40px;font-size:24px;color:#000;font-weight:400;transform:scaleX(0.9221);transform-origin:0 0;">R01</div>
<div class="t" style="left:3385px;top:817.40px;font-size:24px;color:#000;font-weight:400;transform:scaleX(0.9569);transform-origin:0 0;">0x00</div>
<div class="t" style="left:3173px;top:861.40px;font-size:24px;color:#000;font-weight:400;transform:scaleX(0.9221);transform-origin:0 0;">R02</div>
<div class="t" style="left:3385px;top:861.40px;font-size:24px;color:#000;font-weight:400;transform:scaleX(0.9569);transform-origin:0 0;">0x02</div>
<div class="t" style="left:3173px;top:905.40px;font-size:24px;color:#000;font-weight:400;transform:scaleX(0.9221);transform-origin:0 0;">R03</div>
<div class="t" style="left:3385px;top:905.40px;font-size:24px;color:#000;font-weight:400;transform:scaleX(0.9569);transform-origin:0 0;">0x03</div>
<div class="t" style="left:3173px;top:949.40px;font-size:24px;color:#000;font-weight:400;transform:scaleX(0.9221);transform-origin:0 0;">R04</div>
<div class="t" style="left:3385px;top:949.40px;font-size:24px;color:#000;font-weight:400;transform:scaleX(0.9569);transform-origin:0 0;">0x04</div>
<div class="t" style="left:3173px;top:993.40px;font-size:24px;color:#000;font-weight:400;transform:scaleX(0.9221);transform-origin:0 0;">R05</div>
<div class="t" style="left:3385px;top:993.40px;font-size:24px;color:#000;font-weight:400;transform:scaleX(0.9569);transform-origin:0 0;">0x05</div>
<div class="t" style="left:3173px;top:1037.40px;font-size:24px;color:#000;font-weight:400;transform:scaleX(0.9221);transform-origin:0 0;">R06</div>
<div class="t" style="left:3385px;top:1037.40px;font-size:24px;color:#000;font-weight:400;transform:scaleX(0.9569);transform-origin:0 0;">0x06</div>
<div class="t" style="left:3173px;top:1081.40px;font-size:24px;color:#000;font-weight:400;transform:scaleX(0.9221);transform-origin:0 0;">R07</div>
<div class="t" style="left:3385px;top:1081.40px;font-size:24px;color:#000;font-weight:400;transform:scaleX(0.9569);transform-origin:0 0;">0x07</div>
<div class="t" style="left:3173px;top:1125.40px;font-size:24px;color:#000;font-weight:400;transform:scaleX(0.9221);transform-origin:0 0;">R08</div>
<div class="t" style="left:3385px;top:1125.40px;font-size:24px;color:#000;font-weight:400;transform:scaleX(0.9569);transform-origin:0 0;">0x08</div>
<div class="t" style="left:3173px;top:1169.40px;font-size:24px;color:#000;font-weight:400;transform:scaleX(0.9221);transform-origin:0 0;">R09</div>
<div class="t" style="left:3385px;top:1169.40px;font-size:24px;color:#000;font-weight:400;transform:scaleX(0.9569);transform-origin:0 0;">0x09</div>
<div class="t" style="left:3173px;top:1213.40px;font-size:24px;color:#000;font-weight:400;transform:scaleX(0.9221);transform-origin:0 0;">R10</div>
<div class="t" style="left:3385px;top:1213.40px;font-size:24px;color:#000;font-weight:400;transform:scaleX(0.9569);transform-origin:0 0;">0x10</div>
<div class="t" style="left:3173px;top:1257.40px;font-size:24px;color:#000;font-weight:400;transform:scaleX(0.9610);transform-origin:0 0;">R11</div>
<div class="t" style="left:3385px;top:1257.40px;font-size:24px;color:#000;font-weight:400;transform:scaleX(0.9908);transform-origin:0 0;">0x11</div>
<div class="t" style="left:3173px;top:1301.40px;font-size:24px;color:#000;font-weight:400;transform:scaleX(0.9221);transform-origin:0 0;">R12</div>
<div class="t" style="left:3385px;top:1301.40px;font-size:24px;color:#000;font-weight:400;transform:scaleX(0.9569);transform-origin:0 0;">0x12</div>
<div class="t" style="left:3173px;top:1345.40px;font-size:24px;color:#000;font-weight:400;transform:scaleX(0.9221);transform-origin:0 0;">R13</div>
<div class="t" style="left:3385px;top:1345.40px;font-size:24px;color:#000;font-weight:400;transform:scaleX(0.9569);transform-origin:0 0;">0x13</div>
<div class="t" style="left:3173px;top:1389.40px;font-size:24px;color:#000;font-weight:400;transform:scaleX(0.9221);transform-origin:0 0;">R14</div>
<div class="t" style="left:3385px;top:1389.40px;font-size:24px;color:#000;font-weight:400;transform:scaleX(0.9569);transform-origin:0 0;">0x14</div>
<div class="t" style="left:3173px;top:1433.40px;font-size:24px;color:#000;font-weight:400;transform:scaleX(0.9221);transform-origin:0 0;">R15</div>
<div class="t" style="left:3385px;top:1433.40px;font-size:24px;color:#000;font-weight:400;transform:scaleX(0.9569);transform-origin:0 0;">0x15</div>
<div class="t" style="left:3173px;top:1477.40px;font-size:24px;color:#000;font-weight:400;transform:scaleX(0.9221);transform-origin:0 0;">R16</div>
<div class="t" style="left:3385px;top:1477.40px;font-size:24px;color:#000;font-weight:400;transform:scaleX(0.9569);transform-origin:0 0;">0x16</div>
<div class="t" style="left:3173px;top:1521.40px;font-size:24px;color:#000;font-weight:400;transform:scaleX(0.9221);transform-origin:0 0;">R17</div>
<div class="t" style="left:3385px;top:1521.40px;font-size:24px;color:#000;font-weight:400;transform:scaleX(0.9569);transform-origin:0 0;">0x17</div>
<div class="t" style="left:3173px;top:1565.40px;font-size:24px;color:#000;font-weight:400;transform:scaleX(0.9221);transform-origin:0 0;">R18</div>
<div class="t" style="left:3385px;top:1565.40px;font-size:24px;color:#E51400;font-weight:400;transform:scaleX(0.8888);transform-origin:0 0;">0xC8</div>
<div class="t" style="left:3173px;top:1609.40px;font-size:24px;color:#000;font-weight:400;transform:scaleX(0.9221);transform-origin:0 0;">R19</div>
<div class="t" style="left:3385px;top:1609.40px;font-size:24px;color:#000;font-weight:400;transform:scaleX(0.9569);transform-origin:0 0;">0x00</div>
<div class="t" style="left:3173px;top:1653.40px;font-size:24px;color:#000;font-weight:400;transform:scaleX(0.9221);transform-origin:0 0;">R20</div>
<div class="t" style="left:3385px;top:1653.40px;font-size:24px;color:#000;font-weight:400;transform:scaleX(0.9569);transform-origin:0 0;">0x20</div>
<div class="t" style="left:3173px;top:1697.40px;font-size:24px;color:#000;font-weight:400;transform:scaleX(0.9221);transform-origin:0 0;">R21</div>
<div class="t" style="left:3385px;top:1697.40px;font-size:24px;color:#000;font-weight:400;transform:scaleX(0.9569);transform-origin:0 0;">0x21</div>
<div class="t" style="left:3173px;top:1741.40px;font-size:24px;color:#000;font-weight:400;transform:scaleX(0.9221);transform-origin:0 0;">R22</div>
<div class="t" style="left:3385px;top:1741.40px;font-size:24px;color:#000;font-weight:400;transform:scaleX(0.9569);transform-origin:0 0;">0x12</div>
<div class="t" style="left:3173px;top:1785.40px;font-size:24px;color:#000;font-weight:400;transform:scaleX(0.9221);transform-origin:0 0;">R23</div>
<div class="t" style="left:3385px;top:1785.40px;font-size:24px;color:#000;font-weight:400;transform:scaleX(0.9569);transform-origin:0 0;">0x04</div>
<div class="t" style="left:3173px;top:1829.40px;font-size:24px;color:#000;font-weight:400;transform:scaleX(0.9221);transform-origin:0 0;">R24</div>
<div class="t" style="left:3385px;top:1829.40px;font-size:24px;color:#000;font-weight:400;transform:scaleX(0.9569);transform-origin:0 0;">0x01</div>
<div class="t" style="left:3173px;top:1873.40px;font-size:24px;color:#000;font-weight:400;transform:scaleX(0.9221);transform-origin:0 0;">R25</div>
<div class="t" style="left:3385px;top:1873.40px;font-size:24px;color:#000;font-weight:400;transform:scaleX(0.9569);transform-origin:0 0;">0x00</div>
<div class="t" style="left:3173px;top:1917.40px;font-size:24px;color:#000;font-weight:400;transform:scaleX(0.9221);transform-origin:0 0;">R26</div>
<div class="t" style="left:3385px;top:1917.40px;font-size:24px;color:#000;font-weight:400;transform:scaleX(0.9569);transform-origin:0 0;">0x26</div>
<div class="t" style="left:3173px;top:1961.40px;font-size:24px;color:#000;font-weight:400;transform:scaleX(0.9221);transform-origin:0 0;">R27</div>
<div class="t" style="left:3385px;top:1961.40px;font-size:24px;color:#000;font-weight:400;transform:scaleX(0.9569);transform-origin:0 0;">0x27</div>
<div class="t" style="left:3173px;top:2005.40px;font-size:24px;color:#000;font-weight:400;transform:scaleX(0.9221);transform-origin:0 0;">R28</div>
<div class="t" style="left:3385px;top:2005.40px;font-size:24px;color:#000;font-weight:400;transform:scaleX(0.9569);transform-origin:0 0;">0x04</div>
<div class="a" style="left:3140px;top:2038px;width:193px;height:40px;background:#FFFFFF;"></div>
<div class="a" style="left:3333px;top:2038px;width:330px;height:2px;background:#8E9BBC;"></div>
<div class="a" style="left:3335px;top:2040px;width:328px;height:40px;background:#4D6082;"></div>
<div class="a" style="left:3333px;top:2038px;width:2px;height:42px;background:#8E9BBC;"></div>
<div class="a" style="left:3138px;top:2078px;width:197px;height:2px;background:#8E9BBC;"></div>
<div class="a" style="left:3663px;top:2038px;width:571px;height:2px;background:#8E9BBC;"></div>
<div class="t" style="left:3151px;top:2047.60px;font-size:24px;color:#000;font-weight:400;transform:scaleX(0.9417);transform-origin:0 0;">Processor Status</div>
<div class="t" style="left:3345px;top:2048.60px;font-size:24px;color:#FFFFFF;font-weight:400;transform:scaleX(1.0001);transform-origin:0 0;">Solution Explorer</div>
<div class="t" style="left:3547px;top:2048.60px;font-size:24px;color:#FFFFFF;font-weight:400;transform:scaleX(0.9827);transform-origin:0 0;">Properties</div>
<div class="a" style="left:14px;top:2092px;width:2098px;height:608px;background:#8E9BBC;"></div>
<div class="a" style="left:16px;top:2094px;width:2094px;height:44px;background:#4D6082;"></div>
<div class="t" style="left:24px;top:2105.60px;font-size:24px;color:#FFFFFF;font-weight:400;transform:scaleX(0.9926);transform-origin:0 0;">Watch 1</div>
<svg class="a" style="left:2010px;top:2111px;" width="17" height="10" viewBox="0 0 17 10"><path d="M0 0 H16 L8 8 Z" fill="#D0D5DF"/></svg>
<svg class="a" style="left:2045px;top:2104px;" width="16" height="24" viewBox="0 0 16 24"><rect x="3" y="1" width="9" height="12" fill="none" stroke="#D0D5DF" stroke-width="2.2"/><rect x="8" y="1" width="4" height="12" fill="#D0D5DF"/><path d="M0 14 H15" stroke="#D0D5DF" stroke-width="2"/><path d="M7.5 14 V23" stroke="#D0D5DF" stroke-width="2"/></svg>
<svg class="a" style="left:2076px;top:2107px;" width="21" height="18" viewBox="0 0 21 18"><path d="M1.5 1 L19.5 17 M19.5 1 L1.5 17" stroke="#D0D5DF" stroke-width="2.6"/></svg>
<div class="a" style="left:16px;top:2138px;width:2094px;height:560px;background:#FFFFFF;"></div>
<div class="a" style="left:31px;top:2138px;width:2px;height:36px;background:#E3E3E3;"></div>
<div class="a" style="left:679px;top:2138px;width:2px;height:36px;background:#E3E3E3;"></div>
<div class="a" style="left:1975px;top:2138px;width:2px;height:36px;background:#E3E3E3;"></div>
<div class="a" style="left:16px;top:2174px;width:2060px;height:2px;background:#E3E3E3;"></div>
<div class="t" style="left:38px;top:2146.60px;font-size:24px;color:#1E1E1E;font-weight:400;">Name</div>
<div class="t" style="left:685px;top:2146.60px;font-size:24px;color:#1E1E1E;font-weight:400;">Value</div>
<div class="t" style="left:1981px;top:2146.60px;font-size:24px;color:#1E1E1E;font-weight:400;transform:scaleX(1.0378);transform-origin:0 0;">Type</div>
<div class="a" style="left:33px;top:2212px;width:2043px;height:1px;background:#EEEEEE;"></div>
<div class="a" style="left:33px;top:2249px;width:2043px;height:1px;background:#EEEEEE;"></div>
<div class="a" style="left:33px;top:2286px;width:2043px;height:1px;background:#EEEEEE;"></div>
<div class="a" style="left:31px;top:2176px;width:1px;height:111px;background:#EEEEEE;"></div>
<div class="a" style="left:679px;top:2176px;width:1px;height:111px;background:#EEEEEE;"></div>
<div class="a" style="left:1975px;top:2176px;width:1px;height:111px;background:#EEEEEE;"></div>
<svg class="a" style="left:72px;top:2183px;" width="22" height="20" viewBox="0 0 22 20"><path d="M3 7 L11 3 L19 7 V13 L11 17 L3 13 Z" fill="#1C5FB0"/><path d="M3 7 L11 11 L19 7 L11 3 Z" fill="#6FA8E8"/><path d="M11 11 V17" stroke="#0E3F80" stroke-width="1"/></svg>
<svg class="a" style="left:72px;top:2220px;" width="22" height="20" viewBox="0 0 22 20"><path d="M3 7 L11 3 L19 7 V13 L11 17 L3 13 Z" fill="#1C5FB0"/><path d="M3 7 L11 11 L19 7 L11 3 Z" fill="#6FA8E8"/><path d="M11 11 V17" stroke="#0E3F80" stroke-width="1"/></svg>
<div class="t" style="left:107px;top:2183.60px;font-size:24px;color:#000;font-weight:400;transform:scaleX(1.0329);transform-origin:0 0;">uxRegTestError1</div>
<div class="t" style="left:107px;top:2220.60px;font-size:24px;color:#000;font-weight:400;transform:scaleX(1.0329);transform-origin:0 0;">uxRegTestError2</div>
<div class="t" style="left:686px;top:2183.60px;font-size:24px;color:#000;font-weight:400;">0</div>
<div class="t" style="left:686px;top:2220.60px;font-size:24px;color:#000;font-weight:400;">0</div>
<div class="a" style="left:1977px;top:2176px;width:99px;height:124px;overflow:hidden;">
<div class="t" style="left:4px;top:7.60px;font-size:24px;color:#000;font-weight:400;">UBaseType_t</div>
<div class="t" style="left:4px;top:44.60px;font-size:24px;color:#000;font-weight:400;">UBaseType_t</div>
</div>
<div class="a" style="left:2076px;top:2138px;width:34px;height:560px;background:#E8E8EC;"></div>
<svg class="a" style="left:2085px;top:2153px;" width="18" height="10" viewBox="0 0 18 10"><path d="M0 9 H17 L8.5 0 Z" fill="#C6C6CE"/></svg>
<svg class="a" style="left:2085px;top:2673px;" width="18" height="10" viewBox="0 0 18 10"><path d="M0 0 H17 L8.5 9 Z" fill="#C6C6CE"/></svg>
<div class="a" style="left:14px;top:2700px;width:166px;height:40px;background:#4D6082;"></div>
<div class="a" style="left:180px;top:2698px;width:109px;height:42px;background:#8E9BBC;"></div>
<div class="a" style="left:182px;top:2698px;width:105px;height:40px;background:#FFFFFF;"></div>
<div class="a" style="left:289px;top:2700px;width:106px;height:40px;background:#4D6082;"></div>
<div class="t" style="left:25px;top:2709.60px;font-size:24px;color:#FFFFFF;font-weight:400;transform:scaleX(1.0118);transform-origin:0 0;">Autos</div>
<div class="t" style="left:106px;top:2709.60px;font-size:24px;color:#FFFFFF;font-weight:400;transform:scaleX(0.9470);transform-origin:0 0;">Locals</div>
<div class="t" style="left:192px;top:2707.60px;font-size:24px;color:#000;font-weight:400;transform:scaleX(0.9926);transform-origin:0 0;">Watch 1</div>
<div class="t" style="left:300px;top:2709.60px;font-size:24px;color:#FFFFFF;font-weight:400;transform:scaleX(0.9926);transform-origin:0 0;">Watch 2</div>
<div class="a" style="left:2124px;top:2092px;width:2110px;height:608px;background:#8E9BBC;"></div>
<div class="a" style="left:2126px;top:2094px;width:2106px;height:44px;background:#4D6082;"></div>
<div class="t" style="left:2134px;top:2105.60px;font-size:24px;color:#FFFFFF;font-weight:400;transform:scaleX(0.9371);transform-origin:0 0;">FreeRTOS Viewer (Beta)</div>
<svg class="a" style="left:4132px;top:2111px;" width="17" height="10" viewBox="0 0 17 10"><path d="M0 0 H16 L8 8 Z" fill="#D0D5DF"/></svg>
<svg class="a" style="left:4167px;top:2104px;" width="16" height="24" viewBox="0 0 16 24"><rect x="3" y="1" width="9" height="12" fill="none" stroke="#D0D5DF" stroke-width="2.2"/><rect x="8" y="1" width="4" height="12" fill="#D0D5DF"/><path d="M0 14 H15" stroke="#D0D5DF" stroke-width="2"/><path d="M7.5 14 V23" stroke="#D0D5DF" stroke-width="2"/></svg>
<svg class="a" style="left:4198px;top:2107px;" width="21" height="18" viewBox="0 0 21 18"><path d="M1.5 1 L19.5 17 M19.5 1 L1.5 17" stroke="#D0D5DF" stroke-width="2.6"/></svg>
<div class="a" style="left:2126px;top:2138px;width:2106px;height:560px;background:#FFFFFF;"></div>
<div class="a" style="left:2132px;top:2144px;width:321px;height:548px;background:#A0A0A0;"></div>
<div class="a" style="left:2134px;top:2146px;width:317px;height:544px;background:#FFFFFF;"></div>
<div class="a" style="left:2136px;top:2148px;width:313px;height:46px;background:#DCDCDC;"></div>
<div class="a" style="left:2138px;top:2150px;width:309px;height:42px;background:#F5F5F5;"></div>
<div class="t" style="left:2147px;top:2160.05px;font-size:27px;color:#000;font-weight:700;transform:scaleX(0.9380);transform-origin:0 0;">System</div>
<div class="t" style="left:2147px;top:2205.45px;font-size:27px;color:#000;font-weight:700;transform:scaleX(0.8813);transform-origin:0 0;">Tasks</div>
<div class="t" style="left:2147px;top:2251.45px;font-size:27px;color:#000;font-weight:700;transform:scaleX(0.9643);transform-origin:0 0;">Queues</div>
<div class="t" style="left:2147px;top:2296.85px;font-size:27px;color:#000;font-weight:700;transform:scaleX(1.0027);transform-origin:0 0;">Mutexes / Semaphores</div>
<div class="a" style="left:2459px;top:2138px;width:2px;height:560px;background:#E6E6E6;"></div>
<div class="t" style="left:2474px;top:2162.40px;font-size:36px;color:#008000;font-weight:700;transform:scaleX(0.9526);transform-origin:0 0;">System</div>
<div class="a" style="left:2465px;top:2211px;width:1762px;height:481px;background:#6D8BB5;"></div>
<div class="a" style="left:2467px;top:2215px;width:1758px;height:475px;background:#FFFFFF;"></div>
<div class="a" style="left:2465px;top:2211px;width:1762px;height:4px;background:#E6E6E6;"></div>
<div class="a" style="left:2467px;top:2215px;width:1758px;height:46px;background:#F0F0F0;background:linear-gradient(#FFFFFF 0%, #FFFFFF 38%, #F6F7FA 42%, #F4F5F8 100%);"></div>
<div class="a" style="left:2467px;top:2259px;width:1758px;height:2px;background:#D5D5D5;"></div>
<div class="a" style="left:2851px;top:2217px;width:2px;height:42px;background:#D5D5D5;"></div>
<div class="a" style="left:3257px;top:2217px;width:2px;height:42px;background:#D5D5D5;"></div>
<div class="t" style="left:2490px;top:2226.60px;font-size:24px;color:#000;font-weight:400;">Name</div>
<div class="t" style="left:2864px;top:2226.60px;font-size:24px;color:#000;font-weight:400;">Value</div>
<div class="a" style="left:2467px;top:2261.0px;width:12px;height:35.86999999999989px;background:#F4F4F4;"></div>
<div class="a" style="left:2467px;top:2295.5px;width:12px;height:1.3699999999998909px;background:#E0E0E0;"></div>
<div class="t" style="left:2482px;top:2269.10px;font-size:24px;color:#000;font-weight:400;transform:scaleX(0.9780);transform-origin:0 0;">Number of Tasks:</div>
<div class="t" style="left:2856px;top:2269.10px;font-size:24px;color:#000;font-weight:400;">5</div>
<div class="a" style="left:2479px;top:2296.87px;width:1746px;height:35.86999999999989px;background:#F7F8FC;"></div>
<div class="a" style="left:2467px;top:2296.87px;width:12px;height:35.86999999999989px;background:#F4F4F4;"></div>
<div class="a" style="left:2467px;top:2331.37px;width:12px;height:1.3699999999998909px;background:#E0E0E0;"></div>
<div class="t" style="left:2482px;top:2304.97px;font-size:24px;color:#000;font-weight:400;transform:scaleX(0.9881);transform-origin:0 0;">Stack Growth Direction:</div>
<div class="t" style="left:2856px;top:2304.97px;font-size:24px;color:#000;font-weight:400;transform:scaleX(1.0098);transform-origin:0 0;">Downward</div>
<div class="a" style="left:2467px;top:2332.74px;width:12px;height:35.86999999999989px;background:#F4F4F4;"></div>
<div class="a" style="left:2467px;top:2367.24px;width:12px;height:1.3699999999998909px;background:#E0E0E0;"></div>
<div class="t" style="left:2482px;top:2340.84px;font-size:24px;color:#000;font-weight:400;transform:scaleX(0.9802);transform-origin:0 0;">Tick Count:</div>
<div class="t" style="left:2856px;top:2340.84px;font-size:24px;color:#000;font-weight:400;">200</div>
<div class="a" style="left:2479px;top:2368.61px;width:1746px;height:35.86999999999989px;background:#F7F8FC;"></div>
<div class="a" style="left:2467px;top:2368.61px;width:12px;height:35.86999999999989px;background:#F4F4F4;"></div>
<div class="a" style="left:2467px;top:2403.11px;width:12px;height:1.3699999999998909px;background:#E0E0E0;"></div>
<div class="t" style="left:2482px;top:2376.71px;font-size:24px;color:#000;font-weight:400;transform:scaleX(0.9746);transform-origin:0 0;">Top Ready Priority:</div>
<div class="t" style="left:2856px;top:2376.71px;font-size:24px;color:#000;font-weight:400;">3</div>
<div class="a" style="left:2467px;top:2404.48px;width:12px;height:35.86999999999989px;background:#F4F4F4;"></div>
<div class="a" style="left:2467px;top:2438.98px;width:12px;height:1.3699999999998909px;background:#E0E0E0;"></div>
<div class="t" style="left:2482px;top:2412.58px;font-size:24px;color:#000;font-weight:400;transform:scaleX(0.9660);transform-origin:0 0;">Scheduler Suspended:</div>
<div class="t" style="left:2856px;top:2412.58px;font-size:24px;color:#000;font-weight:400;">No</div>
<div class="a" style="left:2479px;top:2440.35px;width:1746px;height:35.86999999999989px;background:#F7F8FC;"></div>
<div class="a" style="left:2467px;top:2440.35px;width:12px;height:35.86999999999989px;background:#F4F4F4;"></div>
<div class="a" style="left:2467px;top:2474.85px;width:12px;height:1.3699999999998909px;background:#E0E0E0;"></div>
<div class="t" style="left:2482px;top:2448.45px;font-size:24px;color:#000;font-weight:400;transform:scaleX(0.9757);transform-origin:0 0;">Scheduler Running:</div>
<div class="t" style="left:2856px;top:2448.45px;font-size:24px;color:#000;font-weight:400;">Yes</div>
<div class="a" style="left:2467px;top:2476.22px;width:12px;height:35.86999999999989px;background:#F4F4F4;"></div>
<div class="a" style="left:2467px;top:2510.72px;width:12px;height:1.3699999999998909px;background:#E0E0E0;"></div>
<div class="t" style="left:2482px;top:2484.32px;font-size:24px;color:#000;font-weight:400;transform:scaleX(0.9644);transform-origin:0 0;">Missed Ticks:</div>
<div class="t" style="left:2856px;top:2484.32px;font-size:24px;color:#000;font-weight:400;">NA</div>
<div class="a" style="left:2479px;top:2512.09px;width:1746px;height:35.86999999999989px;background:#F7F8FC;"></div>
<div class="a" style="left:2467px;top:2512.09px;width:12px;height:35.86999999999989px;background:#F4F4F4;"></div>
<div class="a" style="left:2467px;top:2546.59px;width:12px;height:1.3699999999998909px;background:#E0E0E0;"></div>
<div class="t" style="left:2482px;top:2520.19px;font-size:24px;color:#000;font-weight:400;transform:scaleX(1.0070);transform-origin:0 0;">Number of Overflows:</div>
<div class="t" style="left:2856px;top:2520.19px;font-size:24px;color:#000;font-weight:400;">0</div>
<div class="a" style="left:2467px;top:2547.96px;width:12px;height:35.86999999999989px;background:#F4F4F4;"></div>
<div class="a" style="left:2467px;top:2582.46px;width:12px;height:1.3699999999998909px;background:#E0E0E0;"></div>
<div class="t" style="left:2482px;top:2556.06px;font-size:24px;color:#000;font-weight:400;transform:scaleX(0.9823);transform-origin:0 0;">Next Task Unblock Time:</div>
<div class="t" style="left:2856px;top:2556.06px;font-size:24px;color:#000;font-weight:400;transform:scaleX(0.9865);transform-origin:0 0;">There is no blocked task in the system</div>
<div class="a" style="left:2479px;top:2583.83px;width:1746px;height:35.86999999999989px;background:#F7F8FC;"></div>
<div class="a" style="left:2467px;top:2583.83px;width:12px;height:35.86999999999989px;background:#F4F4F4;"></div>
<div class="a" style="left:2467px;top:2618.33px;width:12px;height:1.3699999999998909px;background:#E0E0E0;"></div>
<div class="t" style="left:2482px;top:2591.93px;font-size:24px;color:#000;font-weight:400;transform:scaleX(0.9771);transform-origin:0 0;">Number of Tasks To Be Terminated:</div>
<div class="t" style="left:2856px;top:2591.93px;font-size:24px;color:#000;font-weight:400;">NA</div>
<div class="a" style="left:2467px;top:2619.7px;width:12px;height:35.86999999999989px;background:#F4F4F4;"></div>
<div class="a" style="left:2467px;top:2654.2px;width:12px;height:1.3699999999998909px;background:#E0E0E0;"></div>
<div class="t" style="left:2482px;top:2627.80px;font-size:24px;color:#000;font-weight:400;transform:scaleX(0.9938);transform-origin:0 0;">Number of Priority Levels:</div>
<div class="t" style="left:2856px;top:2627.80px;font-size:24px;color:#000;font-weight:400;">0</div>
<div class="a" style="left:2479px;top:2261px;width:2px;height:394px;background:#E6E6E6;"></div>
<div class="t" style="left:3756px;top:2579.85px;font-size:39px;color:#BBBBBB;font-weight:400;transform:scaleX(1.0267);transform-origin:0 0;">Activate Windows</div>
<div class="t" style="left:3756px;top:2632.20px;font-size:28px;color:#BBBBBB;font-weight:400;transform:scaleX(1.0294);transform-origin:0 0;">Go to Settings to activate Windows.</div>
<div class="a" style="left:2124px;top:2698px;width:274px;height:42px;background:#8E9BBC;"></div>
<div class="a" style="left:2126px;top:2698px;width:270px;height:40px;background:#FFFFFF;"></div>
<div class="a" style="left:2398px;top:2700px;width:943px;height:40px;background:#4D6082;"></div>
<div class="t" style="left:2137px;top:2707.60px;font-size:24px;color:#000;font-weight:400;transform:scaleX(0.9371);transform-origin:0 0;">FreeRTOS Viewer (Beta)</div>
<div class="t" style="left:2407px;top:2709.60px;font-size:24px;color:#FFFFFF;font-weight:400;transform:scaleX(0.9432);transform-origin:0 0;">Call Stack</div>
<div class="t" style="left:2528px;top:2709.60px;font-size:24px;color:#FFFFFF;font-weight:400;transform:scaleX(0.9886);transform-origin:0 0;">Breakpoints</div>
<div class="t" style="left:2673px;top:2709.60px;font-size:24px;color:#FFFFFF;font-weight:400;transform:scaleX(1.0190);transform-origin:0 0;">Command Window</div>
<div class="t" style="left:2898px;top:2709.60px;font-size:24px;color:#FFFFFF;font-weight:400;transform:scaleX(1.0256);transform-origin:0 0;">Immediate Window</div>
<div class="t" style="left:3126px;top:2709.60px;font-size:24px;color:#FFFFFF;font-weight:400;transform:scaleX(1.0742);transform-origin:0 0;">Output</div>
<div class="t" style="left:3222px;top:2709.60px;font-size:24px;color:#FFFFFF;font-weight:400;transform:scaleX(1.0385);transform-origin:0 0;">Memory 4</div>
<div class="a" style="left:2px;top:2752px;width:4244px;height:48px;background:#CA5100;"></div>
<div class="a" style="left:0px;top:2800px;width:4248px;height:2px;background:#D9DDE6;"></div>
<div class="t" style="left:11px;top:2765.60px;font-size:24px;color:#FFFFFF;font-weight:400;transform:scaleX(0.9875);transform-origin:0 0;">Stopped</div>
<div class="t" style="left:3503px;top:2765.60px;font-size:24px;color:#FFFFFF;font-weight:400;transform:scaleX(0.9740);transform-origin:0 0;">Ln 82</div>
<div class="t" style="left:3687px;top:2765.60px;font-size:24px;color:#FFFFFF;font-weight:400;transform:scaleX(0.9905);transform-origin:0 0;">Col 1</div>
<div class="t" style="left:3870px;top:2765.60px;font-size:24px;color:#FFFFFF;font-weight:400;transform:scaleX(0.9921);transform-origin:0 0;">Ch 1</div>
<div class="t" style="left:4142px;top:2765.60px;font-size:24px;color:#FFFFFF;font-weight:400;transform:scaleX(0.9373);transform-origin:0 0;">INS</div>
<svg class="a" style="left:4223px;top:2777px;" width="16" height="16" viewBox="0 0 16 16"><rect x="10" y="-2" width="2" height="2" fill="#8A3A00"/><rect x="12" y="0" width="2" height="2" fill="#F3C9A8"/><rect x="10" y="2" width="2" height="2" fill="#8A3A00"/><rect x="12" y="4" width="2" height="2" fill="#F3C9A8"/><rect x="6" y="2" width="2" height="2" fill="#8A3A00"/><rect x="8" y="4" width="2" height="2" fill="#F3C9A8"/><rect x="10" y="6" width="2" height="2" fill="#8A3A00"/><rect x="12" y="8" width="2" height="2" fill="#F3C9A8"/><rect x="6" y="6" width="2" height="2" fill="#8A3A00"/><rect x="8" y="8" width="2" height="2" fill="#F3C9A8"/><rect x="2" y="6" width="2" height="2" fill="#8A3A00"/><rect x="4" y="8" width="2" height="2" fill="#F3C9A8"/><rect x="10" y="10" width="2" height="2" fill="#8A3A00"/><rect x="12" y="12" width="2" height="2" fill="#F3C9A8"/><rect x="6" y="10" width="2" height="2" fill="#8A3A00"/><rect x="8" y="12" width="2" height="2" fill="#F3C9A8"/><rect x="2" y="10" width="2" height="2" fill="#8A3A00"/><rect x="4" y="12" width="2" height="2" fill="#F3C9A8"/><rect x="-2" y="10" width="2" height="2" fill="#8A3A00"/><rect x="0" y="12" width="2" height="2" fill="#F3C9A8"/></svg>
</body></html>
